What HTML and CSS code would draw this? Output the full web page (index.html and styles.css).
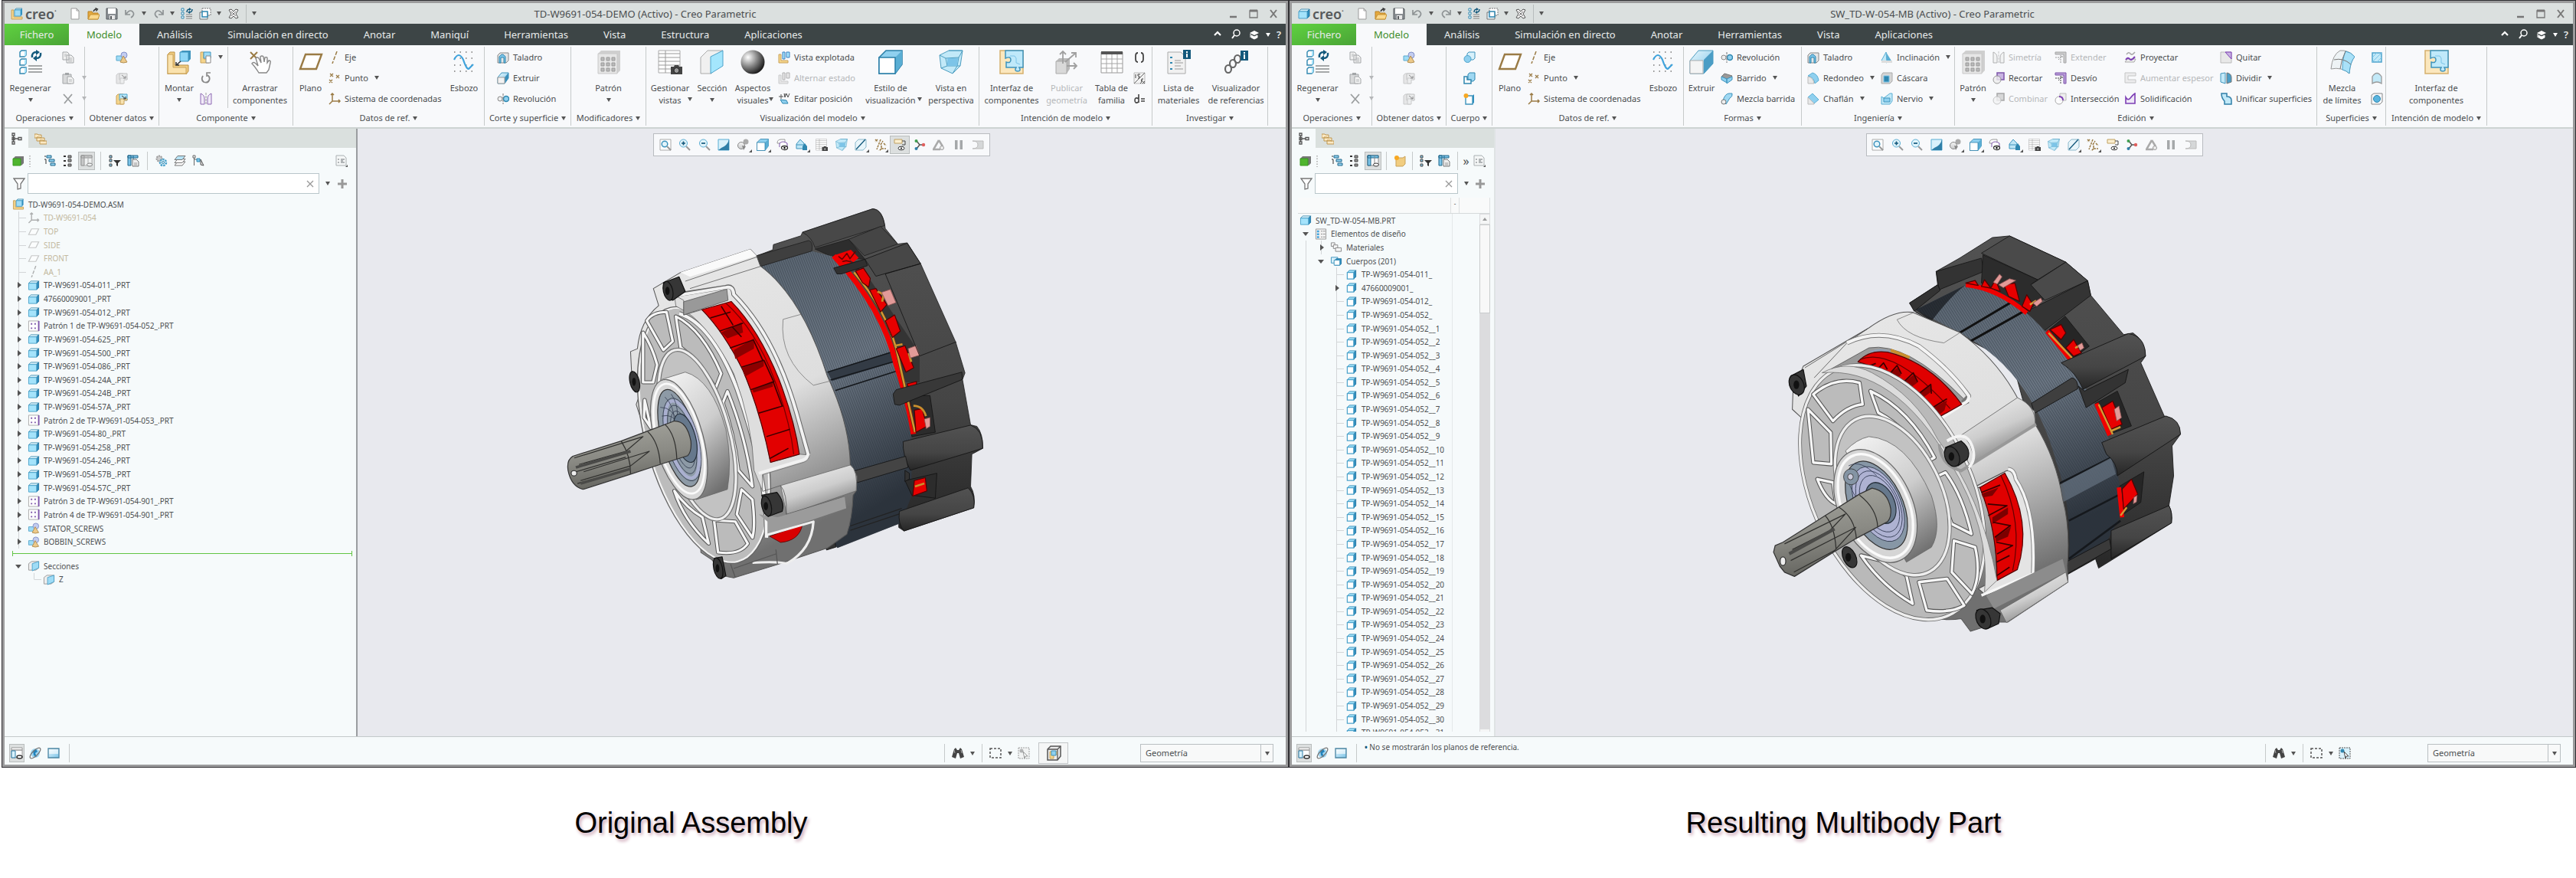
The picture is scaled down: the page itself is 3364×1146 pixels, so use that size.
FILE: index.html
```html
<!DOCTYPE html>
<html lang="es">
<head>
<meta charset="utf-8">
<title>Creo Parametric</title>
<link rel="stylesheet" href="styles.css">
</head>
<body>
<svg class="defs" aria-hidden="true">
<defs>
<linearGradient id="gb" x1="0" y1="0" x2="1" y2="1"><stop offset="0" stop-color="#e8f7fd"/><stop offset="1" stop-color="#7cc4e8"/></linearGradient>
<linearGradient id="gk" x1="0" y1="0" x2="0" y2="1"><stop offset="0" stop-color="#f4f4f4"/><stop offset="1" stop-color="#c9cacb"/></linearGradient>
<radialGradient id="gs" cx=".3" cy=".3" r=".75"><stop offset="0" stop-color="#fff"/><stop offset=".5" stop-color="#8c8c8c"/><stop offset="1" stop-color="#1c1c1c"/></radialGradient>
<symbol id="part" viewBox="0 0 16 16"><path d="M1 5l3-3h11l-3 3z" fill="#d8f1fb" stroke="#4d95b5"/><path d="M12 5l3-3v9l-3 3z" fill="#2b8cbd" stroke="#2b7ba5"/><path d="M1 5h11v9H1z" fill="#a4e3fb" stroke="#4da3cb"/></symbol>
<symbol id="body" viewBox="0 0 16 16"><path d="M2 5l3-3h9l-3 3z" fill="#a4e3fb" stroke="#3f94bd"/><path d="M11 5l3-3v9l-3 3z" fill="#2b8cbd" stroke="#2b7ba5"/><path d="M2 5h9v9H2z" fill="#fff" stroke="#4da3cb" stroke-width="1.3"/></symbol>
<symbol id="bodies" viewBox="0 0 16 16"><path d="M1 3h9v8H1z" fill="#d8f1fb" stroke="#3f94bd"/><path d="M6 7l2-2h7v7l-2 2H6z" fill="#2b8cbd" stroke="#2b7ba5"/><path d="M5 7h8v7H5z" fill="#fff" stroke="#3f94bd"/></symbol>
<symbol id="asm" viewBox="0 0 16 16"><path d="M1 3h3v9h11v3H1z" fill="#f5d58b" stroke="#c9a25b"/><path d="M5 3l2-2h8l-2 2z" fill="#d8f1fb" stroke="#4d95b5"/><path d="M13 3l2-2v8l-2 2z" fill="#2b8cbd"/><path d="M5 3h8v8H5z" fill="#9fdcf6" stroke="#4da3cb"/></symbol>
<symbol id="new" viewBox="0 0 16 16"><path d="M3 1h7l3 3v11H3z" fill="#fff" stroke="#9a9a9a"/><path d="M10 1v3h3" fill="none" stroke="#9a9a9a"/></symbol>
<symbol id="open" viewBox="0 0 16 16"><path d="M1 15V5h5l1 2h7v8z" fill="#e5a93d" stroke="#b98227"/><path d="M1 15l3-6h12l-2 6z" fill="#fbd98d" stroke="#c79334"/><path d="M8 5q1-3 4-3M10.500 .5l3 1.500-2 2.500" fill="none" stroke="#333" stroke-width="1.300"/></symbol>
<symbol id="save" viewBox="0 0 16 16"><path d="M1 1h13l1 1v13H1z" fill="#8a8f93" stroke="#55595c"/><path d="M3 1h10v7H3z" fill="#fff"/><path d="M5 10h7v5H5z" fill="#e8e8e8"/><path d="M6 11h2v4H6z" fill="#55595c"/></symbol>
<symbol id="undo" viewBox="0 0 16 16"><path d="M2 3v6h6M3 8q4-6 8-3 4 4-2 8" fill="none" stroke="#8d9294" stroke-width="1.700"/></symbol>
<symbol id="redo" viewBox="0 0 16 16"><path d="M14 3v6H8M13 8Q9 2 5 5q-4 4 2 8" fill="none" stroke="#8d9294" stroke-width="1.700"/></symbol>
<symbol id="regens" viewBox="0 0 16 16"><g fill="#fff" stroke="#2f87b0"><path d="M1 1h3v3H1zM1 6h3v3H1zM1 11h3v3H1z"/></g><path d="M7 9h8M7 11.500h8M7 14h8" stroke="#888"/><path d="M8 6q0-4 4-4M15 2q0 4-4 4" fill="none" stroke="#14597c" stroke-width="1.500"/><path d="M11 0l3 2-3 2zM12 4l-3 2 3 2z" fill="#14597c"/></symbol>
<symbol id="wins" viewBox="0 0 16 16"><path d="M4 1h11v9H4z" fill="#fff" stroke="#777" stroke-dasharray="2 1"/><path d="M1 6h10v9H1z" fill="#e6f3f8" stroke="#777"/><path d="M4 5h7v7H4z" fill="#fff" stroke="#2f87b0" stroke-width="1.500"/></symbol>
<symbol id="cls" viewBox="0 0 16 16"><path d="M2 3l3-1 3 3 3-3 3 1-3 5 3 5-3 1-3-3-3 3-3-1 3-5z" fill="#f2f2f2" stroke="#555"/><path d="M5 5l6 6M11 5l-6 6" stroke="#777"/></symbol>
<symbol id="copy" viewBox="0 0 16 16"><path d="M1 1h6l2 2v8H1zM6 5h6l3 3v7H6z" fill="#f0f0f0" stroke="#a3a6a8"/><path d="M8 9h5M8 11h5M8 13h5M3 4h3M3 6h2" stroke="#b5b8ba"/></symbol>
<symbol id="paste" viewBox="0 0 16 16"><path d="M1 3h11v12H1z" fill="#d8d9da" stroke="#a3a6a8"/><path d="M4 1h5v3H4z" fill="#a3a6a8"/><path d="M7 6h5l3 3v6H7z" fill="#f4f4f4" stroke="#a3a6a8"/><path d="M9 10h4M9 12h4" stroke="#b5b8ba"/></symbol>
<symbol id="del" viewBox="0 0 16 16"><path d="M2 2l11 12M13 2L3 14" stroke="#9b9e9f" stroke-width="1.800"/></symbol>
<symbol id="shapes" viewBox="0 0 16 16"><path d="M1 6h8v6H1z" fill="#9fdcf6" stroke="#5aa9cc"/><circle cx="11" cy="5" r="4" fill="#c3cdf0" stroke="#8291c9"/><path d="M10 6l5 8q-5 2-9 0z" fill="#ecc98a" stroke="#b28f51"/></symbol>
<symbol id="shr" viewBox="0 0 16 16"><path d="M1 4l2-2h7v13H1z" fill="#f5d58b" stroke="#c9a25b"/><path d="M5 2h10v8H5z" fill="#b5e6fa" stroke="#4da3cb"/><path d="M6 8h9v2h-4v5H6z" fill="#f7e2b0" stroke="#c9a25b"/><path d="M8 4l5 4M13 5v3h-3" stroke="#333" fill="none"/></symbol>
<symbol id="crt" viewBox="0 0 16 16"><path d="M1 1h4v9h7v5H1z" fill="#f5d58b" stroke="#c9a25b"/><path d="M5 1h9v8H5z" fill="#9fdcf6" stroke="#3f94bd"/><path d="M8 6h6v9H8z" fill="#fff" stroke="#888"/></symbol>
<symbol id="rep" viewBox="0 0 16 16"><path d="M4 5q-3 5 1 8 5 2 7-2 2-4-2-7" fill="none" stroke="#888" stroke-width="1.800"/><path d="M9 6V1h5" fill="none" stroke="#888" stroke-width="1.600"/></symbol>
<symbol id="mir" viewBox="0 0 16 16"><path d="M1 1q5 2 5 7v7H1zM15 1q-5 2-5 7v7h5z" fill="#f1ebf8" stroke="#8d68b3"/><path d="M8 0v16" stroke="#999" stroke-dasharray="3 1"/></symbol>
<symbol id="axis" viewBox="0 0 16 16"><path d="M11 0L5 16" stroke="#9a7b45" stroke-width="1.500" stroke-dasharray="5 2"/></symbol>
<symbol id="pt" viewBox="0 0 16 16"><path d="M2 2l4 4M6 2L2 6M10 4l4 4M14 4l-4 4M1 10l4 4M5 10l-4 4" stroke="#9a7b45" stroke-width="1.300"/></symbol>
<symbol id="csys" viewBox="0 0 16 16"><path d="M5 1v10h10M5 11l-4 4M3 3l2-2 2 2M13 9l2 2-2 2" fill="none" stroke="#9a7b45" stroke-width="1.500"/></symbol>
<symbol id="hole" viewBox="0 0 16 16"><path d="M1 5l3-3h11v10l-3 3H1z" fill="#e6e6e6" stroke="#888"/><path d="M3 7q4-6 8 0v8H9V8H5v7H3z" fill="#7cc4e8" stroke="#2f87b0"/></symbol>
<symbol id="ext" viewBox="0 0 16 16"><path d="M1 7l5-6h9v7l-5 7H1z" fill="url(#gb)" stroke="#3f94bd"/><path d="M10 7l5-6v7l-5 7z" fill="#3b8fba"/><path d="M1 7h9v8H1z" fill="#f2f2f2" stroke="#999"/></symbol>
<symbol id="rev" viewBox="0 0 16 16"><circle cx="4" cy="8" r="3" fill="#eee" stroke="#888"/><circle cx="12" cy="8" r="3.500" fill="#8fd0ef" stroke="#2f87b0" stroke-width="1.500"/><path d="M8 1v14" stroke="#777" stroke-dasharray="3 1"/></symbol>
<symbol id="expl" viewBox="0 0 16 16"><path d="M1 4h3v8h9v3H1z" fill="#f5d58b" stroke="#c9a25b"/><path d="M6 1h3v9H6zM11 1h4v7h-4z" fill="#a4e3fb" stroke="#3a7fc0"/></symbol>
<symbol id="epos" viewBox="0 0 16 16"><path d="M1 5h6M4 2v6M9 1v5M8 1l1 5 2-5 2 5 2-5" stroke="#555" fill="none"/><path d="M3 9l8 1 2 4H6z" fill="#8fd0ef" stroke="#2f87b0"/></symbol>
<symbol id="brk" viewBox="0 0 16 16"><path d="M6 2q-3 0-3 4v4q0 4 3 4M10 2q3 0 3 4v4q0 4-3 4" fill="none" stroke="#444" stroke-width="1.800"/></symbol>
<symbol id="fx" viewBox="0 0 16 16"><path d="M1 1h14v14H1z" fill="#f2f2f2" stroke="#bbb"/><path d="M1 15L15 1" stroke="#666"/><path d="M3 3v5M6 3h3M6 3v2q3 0 2 3H6M9 15q2 0 2-6h2M10 11h2M12 12l3 3M15 12l-3 3" stroke="#444" fill="none"/></symbol>
<symbol id="deq" viewBox="0 0 16 16"><path d="M7 2v11M7 8q-5-3-5 2t5 2M10 8h5M10 11h5" fill="none" stroke="#444" stroke-width="1.600"/></symbol>
<symbol id="regen" viewBox="0 0 32 32"><g fill="#fff" stroke="#2f87b0" stroke-width="1.400"><path d="M2 3l2-2h6v6l-2 2H2zM2 14l2-2h6v6l-2 2H2zM2 25l2-2h6v6l-2 2H2z"/></g><g fill="#a4e3fb"><path d="M8 3l2-2v6L8 9zM8 14l2-2v6l-2 2zM8 25l2-2v6l-2 2z"/></g><path d="M13 21h18M13 25h18M13 29h18" stroke="#8a8d8f" stroke-width="1.500"/><path d="M18 10q-1-7 6-7M29 4q1 7-6 7" fill="none" stroke="#14597c" stroke-width="2.500"/><path d="M23 0l5 3-5 4zM24 7l-5 4 5 4z" fill="#14597c"/></symbol>
<symbol id="mont" viewBox="0 0 32 32"><path d="M1 6l3-3h6v17h18v8l-3 4H1z" fill="#f1cd80" stroke="#b98f45"/><path d="M1 6h7v17h17v8H1z" fill="#fae2ad" stroke="#c9a25b"/><path d="M17 3l3-2h11v11l-3 3H17z" fill="#3f94bd"/><path d="M17 3h11v12H17z" fill="#8fd7f7" stroke="#3f94bd"/><path d="M18 15l-6 5M12 16v4h4" stroke="#333" stroke-width="1.500" fill="none"/></symbol>
<symbol id="hand" viewBox="0 0 32 32"><path d="M3 3l9 9M12 3l-9 9" stroke="#9a7b45" stroke-width="2"/><path d="M14 30q-5-8-9-12 2-3 5 0l3 3-3-10q2-2 4 0l3 6-1-8q2-2 4 0l1 7 1-6q3-1 3 1v6l2-3q3 0 2 3l-2 9-3 4z" fill="#fff" stroke="#888" stroke-width="1.400"/></symbol>
<symbol id="plane" viewBox="0 0 32 32"><path d="M9 6h21l-7 19H2z" fill="#fff" stroke="#9a7b45" stroke-width="2.400"/></symbol>
<symbol id="sket" viewBox="0 0 32 32"><path d="M3 3h28M3 11h28M3 20h28M3 28h28" stroke="#777" stroke-width="1.500" stroke-dasharray="1.500 6"/><path d="M3 13q6-12 12 0 5 15 8 11l5-5" fill="none" stroke="#3fa3dc" stroke-width="2.200"/></symbol>
<symbol id="pat" viewBox="0 0 32 32"><path d="M2 5l4-4h25v26l-4 4H2z" fill="#cfcfcf"/><path d="M2 5h25v26H2z" fill="#e6e6e6" stroke="#c8c8c8"/><path d="M6 10h4v4H6zM13 10h4v4h-4zM20 10h4v4h-4zM6 17h4v4H6zM13 17h4v4h-4zM20 17h4v4h-4zM6 24h4v4H6zM13 24h4v4h-4zM20 24h4v4h-4z" fill="#bbb" stroke="#999"/></symbol>
<symbol id="mview" viewBox="0 0 32 32"><path d="M1 1h28v29H1z" fill="#fff" stroke="#aaa"/><path d="M1 5h28M1 10h28M1 15h28M1 20h28M1 25h28M10 1v29" stroke="#999"/><path d="M17 22h4l1-2h5l1 2h4v10H17z" fill="#444"/><circle cx="24.500" cy="27" r="3.500" fill="#999" stroke="#222"/></symbol>
<symbol id="sec" viewBox="0 0 32 32"><path d="M1 10l9-9h20L15 9v22H1z" fill="#f0f0f0" stroke="#aaa"/><path d="M14 9l16-8v20l-16 10z" fill="#a4e6fd" stroke="#4da3cb"/></symbol>
<symbol id="sph" viewBox="0 0 32 32"><circle cx="16" cy="16" r="15.500" fill="url(#gs)"/></symbol>
<symbol id="sty" viewBox="0 0 32 32"><path d="M1 10l9-9h21v18l-9 12H1z" fill="#8fd0ef" stroke="#2a7fa8" stroke-width="1.500"/><path d="M22 10l9-9v18l-9 12z" fill="#5aaed4"/><path d="M1 10h21v21H1z" fill="#fff" stroke="#2a7fa8" stroke-width="1.500"/></symbol>
<symbol id="per" viewBox="0 0 32 32"><path d="M1 7l12-6h18l-3 20-10 10L3 24z" fill="#c2e9f8" stroke="#4d9dc0"/><path d="M1 7l8 4 17-1 5-9-18 0M9 11l2 10 13 0 2-11M3 24l8-3M24 21l4 0M18 31l6-10" fill="none" stroke="#4d9dc0"/><path d="M11 11h14l-1 10H11z" fill="#7cc4e8"/></symbol>
<symbol id="intf" viewBox="0 0 32 32"><path d="M1 1h30v30H1z" fill="#fbe7bd" stroke="#d5b06d" stroke-width="1.500"/><path d="M8 1h23v22h-5q3 5-2 5t-2-5H9v-7q6 2 6-3t-7-2z" fill="#bfe9fa" stroke="#3f94bd" stroke-width="1.500"/><path d="M14 8h6l2 3v6l5 2" fill="none" stroke="#7cc4e8"/></symbol>
<symbol id="pub" viewBox="0 0 32 32"><path d="M2 15l4-4h14v14l-4 6H2z" fill="#b9b9b9"/><path d="M2 15h14v16H2z" fill="#d9d9d9" stroke="#aaa"/><path d="M11 18V2M7 6l4-4 4 4M14 16L28 4M22 4h6v6M16 21h13M25 17l4 4-4 4" fill="none" stroke="#a0a0a0" stroke-width="1.800"/></symbol>
<symbol id="tab" viewBox="0 0 32 32"><path d="M2 3h28v27H2z" fill="#fff" stroke="#999"/><path d="M2 2h28v4H2z" fill="#555"/><path d="M2 12h28M2 18h28M2 24h28M9 6v24M16 6v24M23 6v24" stroke="#a5a5a5"/></symbol>
<symbol id="list" viewBox="0 0 32 32"><path d="M2 3h17l6 6v22H2z" fill="#f1f1f1" stroke="#aaa"/><path d="M5 9h3v2H5zM5 16h3v2H5zM5 24h3v2H5z" fill="#2f87b0"/><path d="M11 14h8M11 17h11M11 21h8M11 25h11" stroke="#999"/><path d="M22 0h10v12H22z" fill="#14597c"/><path d="M26 2h2v2h-2zM26 5h2v5h-2z" fill="#fff"/></symbol>
<symbol id="chain" viewBox="0 0 32 32"><g fill="none" stroke="#666" stroke-width="2.200"><ellipse cx="6" cy="25" rx="4" ry="5"/><ellipse cx="12" cy="18" rx="4" ry="5"/><ellipse cx="18" cy="12" rx="4" ry="5"/></g><path d="M22 1h10v13H22z" fill="#14597c"/><path d="M26 3h2v2h-2zM26 6h2v6h-2z" fill="#fff"/></symbol>
<symbol id="extb" viewBox="0 0 32 32"><path d="M1 14L12 1h19v17L19 31H1z" fill="url(#gb)" stroke="#4d9dc0"/><path d="M19 13L31 1v17L19 31z" fill="#4b9dc5"/><path d="M1 14h17v17H1z" fill="#f4f4f4" stroke="#aaa"/></symbol>
<symbol id="bnd" viewBox="0 0 32 32"><path d="M13 1q11-1 19 8-6 7-7 22Q15 22 1 25 3 6 13 1z" fill="#eef3f5" stroke="#999"/><path d="M20 2q7 1 12 7-6 7-7 22-4-4-9-5 0-15 4-24z" fill="#a9e1f8" stroke="#4da3cb"/><path d="M5 13q12-3 22 6M20 2q-6 12-7 23" fill="none" stroke="#777"/></symbol>
<symbol id="bool" viewBox="0 0 16 16"><path d="M5 3l2-2h8v8l-2 2H5z" fill="#d8f1fb" stroke="#3f94bd"/><circle cx="5.500" cy="10" r="4.500" fill="#8fd0ef" stroke="#4da3cb"/></symbol>
<symbol id="spb" viewBox="0 0 16 16"><path d="M6 3l2-2h7v9l-2 2H6z" fill="#9fd8f2" stroke="#2f87b0"/><path d="M1 6h4v4h5v5H1z" fill="#fff" stroke="#2f87b0" stroke-width="1.500"/></symbol>
<symbol id="nbody" viewBox="0 0 16 16"><path d="M3 4h9l2-2v11l-2 2H3z" fill="#2b8cbd"/><path d="M3 4h9v11H3z" fill="#fff" stroke="#3f94bd" stroke-width="1.400"/><circle cx="3.500" cy="4" r="3" fill="#f7a823"/></symbol>
<symbol id="swp" viewBox="0 0 16 16"><path d="M1 6l4-4 10 3-3 4-3 1z" fill="#999" stroke="#777"/><path d="M1 6l7 3v5l-7-4zM8 9l7-3v4l-7 5z" fill="#8fd0ef" stroke="#3f94bd"/></symbol>
<symbol id="swb" viewBox="0 0 16 16"><path d="M3 10Q6 1 11 1h4q1 4-3 6l-5 8z" fill="#9fd8f2" stroke="#3f94bd"/><circle cx="4" cy="12" r="3" fill="#eee" stroke="#777"/></symbol>
<symbol id="rnd" viewBox="0 0 16 16"><path d="M1 5l6-4q7 2 8 10l-5 4q-1-8-9-10z" fill="#8fd0ef" stroke="#5aaed4"/><path d="M1 6q7 1 8 9H1z" fill="#e8e8e8" stroke="#bbb"/></symbol>
<symbol id="chf" viewBox="0 0 16 16"><path d="M1 6l6-5 8 8-6 5z" fill="#8fd0ef" stroke="#5aaed4"/><path d="M1 6l8 8v1H1z" fill="#e8e8e8" stroke="#bbb"/></symbol>
<symbol id="drf" viewBox="0 0 16 16"><path d="M7 1l8 13H8z" fill="#5aaed4"/><path d="M7 1L1 12l7 3z" fill="#c2e9f8" stroke="#5aaed4"/><path d="M1 12h14v3H1z" fill="#ddd"/></symbol>
<symbol id="shl" viewBox="0 0 16 16"><path d="M1 4l2-3h12v11l-3 3H1z" fill="#d5d5d5" stroke="#aaa"/><path d="M4 5h7v8H4z" fill="#2f87b0" stroke="#7cc4e8"/></symbol>
<symbol id="rib" viewBox="0 0 16 16"><path d="M1 5l3 2 8-6h3v10l-3 4H1z" fill="#c2e9f8" stroke="#5aaed4"/><path d="M4 7h8v5H4z" fill="#8fd0ef" stroke="#3f94bd"/></symbol>
<symbol id="trim" viewBox="0 0 16 16"><path d="M6 1h9v9H6z" fill="#c9b3e3" stroke="#7d55aa" stroke-width="1.500"/><circle cx="6" cy="10" r="5" fill="#eee" fill-opacity=".8" stroke="#999"/></symbol>
<symbol id="off" viewBox="0 0 16 16"><path d="M1 1h14v14h-3V4H1z" fill="#b89bd8" stroke="#7d55aa"/><path d="M1 8h7v7M5 11l5-5M7 6h3v3" fill="none" stroke="#444" stroke-dasharray="2 1"/></symbol>
<symbol id="int" viewBox="0 0 16 16"><path d="M7 1h8v9H7z" fill="#eee" stroke="#bbb"/><circle cx="6" cy="10" r="5" fill="#fff" fill-opacity=".7" stroke="#aaa"/><path d="M6 5q5 0 5 5" fill="none" stroke="#7d3fb5" stroke-width="2"/></symbol>
<symbol id="prj" viewBox="0 0 16 16"><path d="M3 4q3-4 5-1t6-2" fill="none" stroke="#aaa" stroke-width="1.500"/><path d="M1 14l3-4h11l-2 4z" fill="#eee" stroke="#aaa"/><path d="M2 11q3-4 5-1t7-3" fill="none" stroke="#7d3fb5" stroke-width="2"/></symbol>
<symbol id="thk" viewBox="0 0 16 16"><path d="M1 1h14v4H5v5h10v4H1z" fill="#e2e2e2" stroke="#999"/></symbol>
<symbol id="sol" viewBox="0 0 16 16"><path d="M2 6q3 5 6 1t6-6v13H2z" fill="#eee7f7" stroke="#7d3fb5" stroke-width="1.600"/></symbol>
<symbol id="rem" viewBox="0 0 16 16"><path d="M1 1h14v14H1z" fill="#e8e8e8" stroke="#bbb"/><path d="M7 1h8v9z" fill="#c9b3e3" stroke="#7d3fb5"/></symbol>
<symbol id="spl" viewBox="0 0 16 16"><path d="M1 2l6-1v14l-6-2z" fill="#c2e9f8" stroke="#3f94bd"/><path d="M9 1q6 1 6 6v6l-6 2z" fill="#4b9dc5" stroke="#777"/></symbol>
<symbol id="uni" viewBox="0 0 16 16"><path d="M2 1h7v4q6 0 6 5v5H6v-4q-4-4-4-10z" fill="#c2e9f8" stroke="#2f7fa8" stroke-width="1.500"/></symbol>
<symbol id="fill" viewBox="0 0 16 16"><path d="M2 2h12v12H2z" fill="#c2e9f8" stroke="#4da3cb" stroke-width="1.500"/><path d="M2 8l6-6M2 14L14 2M8 14l6-6" stroke="#7cc4e8"/></symbol>
<symbol id="ssf" viewBox="0 0 16 16"><path d="M2 6q6-9 12 0v9q-6-4-12 0z" fill="#c2e9f8" stroke="#999" stroke-width="1.300"/></symbol>
<symbol id="fsf" viewBox="0 0 16 16"><path d="M1 3l3-2h11v11l-3 3H1z" fill="none" stroke="#888"/><circle cx="8" cy="8" r="4.500" fill="#5ab4de" stroke="#2f87b0"/></symbol>
<symbol id="tree" viewBox="0 0 16 16"><path d="M2 1h3v3H2zM2 6.500h3v3H2zM2 12h3v3H2zM10 6.500h4v3h-4zM5 8h5M3.500 4v8" fill="none" stroke="#555" stroke-width="1.300"/></symbol>
<symbol id="fold" viewBox="0 0 16 16"><g fill="#fbe9c4" stroke="#bf9750"><path d="M0 2h4l1 1h4v4H0zM3 6h4l1 1h5v4H3zM7 10h4l1 1h4v4H7z"/></g></symbol>
<symbol id="grn" viewBox="0 0 16 16"><path d="M1 5l3-3h11v9l-3 3z" fill="#777"/><path d="M1 5h10v9H1z" fill="#4fb52f" stroke="#389a20"/></symbol>
<symbol id="dots" viewBox="0 0 6 16"><path d="M3 1v15" stroke="#aaa" stroke-width="1.500" stroke-dasharray="1.500 2"/></symbol>
<symbol id="expd" viewBox="0 0 16 16"><path d="M1 2h2M1 6h2v6" stroke="#333" fill="none"/><g fill="#8fd0ef" stroke="#22698c"><path d="M4 1h6v3H4zM7 6h7v3H7zM9 11h6v3H9z"/></g></symbol>
<symbol id="clps" viewBox="0 0 16 16"><path d="M2 2h3M2 8h3M2 14h3" stroke="#333" stroke-width="2"/><path d="M8 1h4v3H8zM8 6h4v3H8zM8 12h4v3H8z" fill="#999" stroke="#444"/></symbol>
<symbol id="cols" viewBox="0 0 16 16"><path d="M1 1h14v13H1z" fill="#fff" stroke="#888"/><path d="M1 1h14v3H1zM1 1h4v13H1z" fill="#7cc4e8" stroke="#22698c"/><path d="M10 2v9" stroke="#888"/><ellipse cx="12" cy="13" rx="3.500" ry="2" fill="#fff" stroke="#333"/></symbol>
<symbol id="ftr" viewBox="0 0 16 16"><path d="M1 1h3v3H1zM1 6h3v3H1zM1 12h3v3H1z" fill="#8fd0ef" stroke="#444"/><path d="M6 7h10l-4 4v4l-2-1v-3z" fill="#333"/></symbol>
<symbol id="cols2" viewBox="0 0 16 16"><path d="M1 1h13v3H1zM1 1h4v13H1zM8 1v8" fill="#7cc4e8" stroke="#22698c"/><path d="M7 6h5l3 3v6H7z" fill="#eee" stroke="#777"/><path d="M9 11h4M9 13h4" stroke="#999"/></symbol>
<symbol id="gear" viewBox="0 0 16 16"><circle cx="5" cy="5" r="3.500" fill="#ccc" stroke="#999" stroke-width="2" stroke-dasharray="2 1"/><circle cx="10" cy="10" r="4" fill="#e5f5fb" stroke="#4da3cb" stroke-width="2.500" stroke-dasharray="2.500 1"/><circle cx="10" cy="10" r="1.500" fill="#fff" stroke="#2f87b0"/></symbol>
<symbol id="lay" viewBox="0 0 16 16"><g fill="#fff" stroke="#777"><path d="M5 9h10l-4 5H1z"/><path d="M5 5.500h10l-4 5H1z"/><path d="M5 1.500h10l-4 5H1z" fill="#b5e2f5"/></g></symbol>
<symbol id="nodes" viewBox="0 0 16 16"><path d="M1 1h3v3H1zM2.500 4v10M2.500 6h4" stroke="#666" fill="none"/><path d="M6 5h4v4H6z" fill="#7cc4e8" stroke="#2f87b0"/><path d="M11 6l4 8-4-1z" fill="#ddd" stroke="#555"/></symbol>
<symbol id="doc" viewBox="0 0 16 16"><path d="M1 1h10l3 3v10H1z" fill="#f5f7f7" stroke="#aab0b2"/><path d="M3 6h2M3 10h2M7 6h5M7 8h3M7 10h5" stroke="#9aa0a2" stroke-width="1.300"/><path d="M16 13v3h-3z" fill="#555"/></symbol>
<symbol id="fun" viewBox="0 0 16 16"><path d="M1 1h14l-5 7v6l-4 1V8z" fill="#fff" stroke="#777" stroke-width="1.300"/></symbol>
<symbol id="plus" viewBox="0 0 16 16"><path d="M8 2v12M2 8h12" stroke="#999" stroke-width="3"/></symbol>
<symbol id="x" viewBox="0 0 16 16"><path d="M4 4l8 8M12 4l-8 8" stroke="#999" stroke-width="1.300"/></symbol>
<symbol id="npk" viewBox="0 0 16 16"><path d="M3 4h9l3-2v10l-3 3H3z" fill="#f1cd80" stroke="#c9a25b"/><circle cx="4" cy="4" r="3" fill="#f7a823"/></symbol>
<symbol id="pln" viewBox="0 0 16 16"><path d="M5 4h10l-4 8H1z" fill="#fff" stroke="#a5a5a5" stroke-width="1.300"/></symbol>
<symbol id="ptn" viewBox="0 0 16 16"><path d="M1 1h14v14H1z" fill="#fff" stroke="#aaa"/><path d="M15 1v14" stroke="#7d55aa" stroke-width="2"/><path d="M4 4h2v2H4zM9 4h2v2H9zM4 10h2v2H4zM9 10h2v2H9z" fill="#7d55aa"/></symbol>
<symbol id="scn" viewBox="0 0 16 16"><path d="M1 5l4-3h10v9l-4 3H1z" fill="#eee" stroke="#999"/><path d="M6 5l9-3v9l-9 4z" fill="#9fdcf6" stroke="#4da3cb"/></symbol>
<symbol id="des" viewBox="0 0 16 16"><path d="M1 1h14v14H1z" fill="#f2f2f2" stroke="#999"/><path d="M4 3v11" stroke="#3fa3dc" stroke-width="3" stroke-dasharray="2.500 1.500"/><path d="M8 4h2M8 8h2M8 12h2M11 4h3M11 8h3M11 12h3" stroke="#888"/></symbol>
<symbol id="mat" viewBox="0 0 16 16"><g fill="#f6f6f6" stroke="#888"><path d="M1 2h5v5H1z"/><path d="M4 5h6v5H4z"/><path d="M7 9h8v5H7z"/></g></symbol>
<symbol id="zf" viewBox="0 0 16 16"><path d="M1 1h14v14H1z" fill="#fff" stroke="#aaa"/><circle cx="7" cy="7" r="3.800" fill="#e2f4fb" stroke="#3f94bd" stroke-width="1.500"/><path d="M10 10l5 5" stroke="#999" stroke-width="2"/></symbol>
<symbol id="zi" viewBox="0 0 16 16"><path d="M10 10l5 5" stroke="#999" stroke-width="2"/><circle cx="6.500" cy="6" r="5" fill="#e2f4fb" stroke="#5aaed4"/><path d="M4 6h5M6.500 3.500v5" stroke="#14597c" stroke-width="1.700"/></symbol>
<symbol id="zo" viewBox="0 0 16 16"><path d="M10 10l5 5" stroke="#999" stroke-width="2"/><circle cx="6.500" cy="6" r="5" fill="#e2f4fb" stroke="#5aaed4"/><path d="M4 6h5" stroke="#14597c" stroke-width="1.700"/></symbol>
<symbol id="rp" viewBox="0 0 16 16"><path d="M1 1h14v14H1z" fill="#d9f1fb" stroke="#5aaed4"/><path d="M15 1Q13 9 5 12l-4 3h14z" fill="#2f7fa8"/></symbol>
<symbol id="ap" viewBox="0 0 16 16"><circle cx="11" cy="4" r="3.500" fill="#aaa"/><circle cx="5" cy="9" r="4.500" fill="url(#gk)" stroke="#888"/><path d="M6 9l5 1-3 5z" fill="#888"/></symbol>
<symbol id="eye" viewBox="0 0 16 16"><path d="M1 6q0-5 5-5h5v5H1z" fill="#fff" stroke="#999"/><path d="M4 11V6q4-4 10 0v5" fill="#fff" stroke="#7d55aa"/><ellipse cx="10.500" cy="12" rx="4" ry="2.500" fill="#fff" stroke="#333" stroke-width="1.300"/><circle cx="10.500" cy="12" r="1.200"/></symbol>
<symbol id="sv" viewBox="0 0 16 16"><path d="M1 7l5-6 5 5v7H1zM1 8h10" fill="#bfe6f6" stroke="#3f94bd"/><path d="M9 10l3-4 3 4v5H9z" fill="#2f87b0"/></symbol>
<symbol id="cut" viewBox="0 0 16 16"><path d="M1 5l4-4h10v10l-4 4H1z" fill="#e9f5fa" stroke="#8bb9cc"/><path d="M2 14L14 1" stroke="#14597c" stroke-width="1.300"/></symbol>
<symbol id="dtm" viewBox="0 0 16 16"><path d="M1 1l3 3M4 1L1 4M8 1L3 14M8 8l3-5M9 9v4h6M9 13l-3 3M12 6l3 3" fill="none" stroke="#9a7b45" stroke-width="1.500" stroke-dasharray="3 1"/></symbol>
<symbol id="ann" viewBox="0 0 16 16"><path d="M1 1h10v5H1z" fill="#fbefd0" stroke="#c0a060"/><path d="M11 3h4v5h-4" fill="none" stroke="#444"/><ellipse cx="10" cy="12.500" rx="4" ry="2.300" fill="#fff" stroke="#333"/><circle cx="10" cy="12.500" r="1"/></symbol>
<symbol id="spin" viewBox="0 0 16 16"><path d="M4 3l4 5-4 5M8 8h5" stroke="#555" stroke-width="1.500" fill="none"/><circle cx="3.500" cy="3" r="2" fill="#3f9e4f"/><circle cx="3.500" cy="13" r="2" fill="#2f7fa8"/><circle cx="13" cy="8" r="2.200" fill="#e0605e"/></symbol>
<symbol id="tri" viewBox="0 0 16 16"><path d="M8 2L1 14h9M8 2l5 8" fill="none" stroke="#aaa" stroke-width="2.500"/><circle cx="12" cy="12" r="2.500" fill="#eee" stroke="#999"/></symbol>
<symbol id="pau" viewBox="0 0 16 16"><path d="M3 2h3.500v12H3zM9.500 2H13v12H9.500z" fill="#a5a8aa"/></symbol>
<symbol id="res" viewBox="0 0 16 16"><path d="M1 3h14v10H1q7 0 7-5T1 3z" fill="#d5d7d8" stroke="#bbb"/></symbol>
<symbol id="st1" viewBox="0 0 16 16"><path d="M1 1h14v13H1z" fill="#fff" stroke="#999"/><path d="M1 4h14" stroke="#999" stroke-width="1.500"/><path d="M1 5h5v9H1z" fill="#d9f1fb" stroke="#2f7fa8"/><ellipse cx="11.500" cy="13" rx="3.500" ry="2" fill="#fff" stroke="#333" stroke-width="1.500"/></symbol>
<symbol id="glb" viewBox="0 0 16 16"><circle cx="8" cy="8" r="6" fill="#9fd6f2"/><path d="M5 5l4-2 2 3-3 2 2 5-4-2z" fill="#2383bb"/><ellipse cx="8" cy="8" rx="9" ry="3.500" transform="rotate(-45 8 8)" fill="none" stroke="#777" stroke-width="1.300"/></symbol>
<symbol id="scr" viewBox="0 0 16 16"><path d="M1 2h14v12H1z" fill="url(#gb)" stroke="#4d86a3" stroke-width="1.300"/><path d="M2 3h12v6H2z" fill="#fff" fill-opacity=".6"/></symbol>
<symbol id="bin" viewBox="0 0 16 16"><path d="M3 3l2-2 2 3h2l2-3 2 2 3 10-5 2-2-7H7l-2 7-5-2z" fill="#444"/><path d="M3 4l1 4M12 4l1 4" stroke="#aaa"/></symbol>
<symbol id="dsh" viewBox="0 0 16 16"><path d="M1 2h14v12H1z" fill="none" stroke="#555" stroke-width="1.500" stroke-dasharray="3 2"/></symbol>
<symbol id="slc" viewBox="0 0 16 16"><path d="M1 1h14v14H1z" fill="#d9f1fb" stroke="#555" stroke-dasharray="2 1"/><circle cx="5" cy="5" r="2.500" fill="#2f87b0"/><path d="M7 6l6 6h-3l-1 3z" fill="#fff" stroke="#444"/></symbol>
<symbol id="cbs" viewBox="0 0 20 20"><path d="M2 5l4-4h13v13l-4 5H2z" fill="#ececec" stroke="#555" stroke-width="1.500"/><path d="M2 5h13v14M15 5l4-4" fill="none" stroke="#555" stroke-width="1.300"/><path d="M5 8h9v4h-4v5H5z" fill="#f5d58b" stroke="#c9a25b"/><path d="M7 7h6v6H7z" fill="#8fd0ef" stroke="#3f94bd"/></symbol>
<symbol id="min" viewBox="0 0 16 16"><path d="M3 12h9" stroke="#777" stroke-width="2.500"/></symbol>
<symbol id="max" viewBox="0 0 16 16"><path d="M3 4h10v9H3z" fill="none" stroke="#777" stroke-width="1.300"/><path d="M3 4h10" stroke="#777" stroke-width="3"/></symbol>
<symbol id="wx" viewBox="0 0 16 16"><path d="M4 3l8 10M12 3L4 13" stroke="#777" stroke-width="2"/></symbol>
<symbol id="chev" viewBox="0 0 16 16"><path d="M4 9l4-4 4 4" fill="none" stroke="#fff" stroke-width="2.200"/></symbol>
<symbol id="mag" viewBox="0 0 16 16"><circle cx="9" cy="6" r="4" fill="none" stroke="#fff" stroke-width="1.500"/><path d="M6 9l-3 4" stroke="#fff" stroke-width="2"/></symbol>
<symbol id="cap" viewBox="0 0 16 16"><path d="M2 6l6-3 6 3-6 3z" fill="#fff"/><path d="M4 9l4 2 4-2v3l-4 2-4-2zM3 7v5" fill="#fff" stroke="#fff"/></symbol>
<linearGradient id="al" x1="0" y1="0" x2=".35" y2="1"><stop offset="0" stop-color="#e8e8e8"/><stop offset=".6" stop-color="#dedede"/><stop offset=".85" stop-color="#9a9a9a"/><stop offset="1" stop-color="#707070"/></linearGradient>
<linearGradient id="hb" x1=".2" y1="0" x2=".7" y2="1"><stop offset="0" stop-color="#f0f0f0"/><stop offset=".5" stop-color="#cdcdcd"/><stop offset="1" stop-color="#707070"/></linearGradient>
<linearGradient id="bk" x1="0" y1="0" x2="0" y2="1"><stop offset="0" stop-color="#525252"/><stop offset=".6" stop-color="#454545"/><stop offset="1" stop-color="#262626"/></linearGradient>
<linearGradient id="sh" x1=".4" y1="0" x2=".6" y2="1"><stop offset="0" stop-color="#a3a39c"/><stop offset=".5" stop-color="#8a8a84"/><stop offset="1" stop-color="#5f5f5a"/></linearGradient>
<linearGradient id="stt" x1="0" y1="0" x2=".3" y2="1"><stop offset="0" stop-color="#596470"/><stop offset=".5" stop-color="#6b7683"/><stop offset="1" stop-color="#2c333c"/></linearGradient>
<pattern id="lam" width="7" height="7" patternUnits="userSpaceOnUse" patternTransform="rotate(-20)"><path d="M0 0v7" stroke="#29323c" stroke-width="2.500"/></pattern>
<pattern id="lam2" width="7" height="7" patternUnits="userSpaceOnUse" patternTransform="rotate(-34)"><path d="M0 0v7" stroke="#29323c" stroke-width="2.500"/></pattern>
</defs>
</svg>
<main class="page">
<figure class="shot">
<section class="window">
<header class="title"><span class="brand"><svg class="s"><use href="#asm"/></svg>creo<sup>•</sup></span>
<nav class="quick"><button aria-label="Nuevo"><svg class="s"><use href="#new"/></svg></button><button aria-label="Abrir"><svg class="s"><use href="#open"/></svg></button><button aria-label="Guardar"><svg class="s"><use href="#save"/></svg></button><button class="dd" aria-label="Deshacer"><svg class="s"><use href="#undo"/></svg></button><button class="dd" aria-label="Rehacer"><svg class="s"><use href="#redo"/></svg></button><button aria-label="Regenerar"><svg class="s"><use href="#regens"/></svg></button><button class="dd" aria-label="Ventanas"><svg class="s"><use href="#wins"/></svg></button><button aria-label="Cerrar"><svg class="s"><use href="#cls"/></svg></button><button class="more dd" aria-label="Personalizar"></button></nav>
<h1>TD-W9691-054-DEMO (Activo) - Creo Parametric</h1>
<span class="wctl"><button aria-label="Minimizar"><svg class="s"><use href="#min"/></svg></button><button aria-label="Maximizar"><svg class="s"><use href="#max"/></svg></button><button aria-label="Cerrar ventana"><svg class="s"><use href="#wx"/></svg></button></span></header>
<nav class="tabs"><button class="file">Fichero</button><button class="on">Modelo</button><button>Análisis</button><button>Simulación en directo</button><button>Anotar</button><button>Maniquí</button><button>Herramientas</button><button>Vista</button><button>Estructura</button><button>Aplicaciones</button><span class="tools"><button aria-label="Minimizar cinta"><svg class="s"><use href="#chev"/></svg></button><button aria-label="Buscar"><svg class="s"><use href="#mag"/></svg></button><button class="dd" aria-label="Aprendizaje"><svg class="s"><use href="#cap"/></svg></button><button>?</button></span></nav>
<div class="ribbon">
<section class="grp ops"><div class="gb"><button class="big dd"><svg><use href="#regen"/></svg>Regenerar</button><div class="col"><button class="off" aria-label="Copiar"><svg class="s"><use href="#copy"/></svg></button><button class="off dd" aria-label="Pegar"><svg class="s"><use href="#paste"/></svg></button><button class="off dd" aria-label="Suprimir"><svg class="s"><use href="#del"/></svg></button></div></div><button class="gl">Operaciones</button></section>
<section class="grp data"><div class="gb"><div class="col mid"><button aria-label="Función de usuario"><svg class="s"><use href="#shapes"/></svg></button><button class="dim" aria-label="Copiar geometría"><svg class="s"><use href="#shr"/></svg></button><button aria-label="Desabstracción"><svg class="s"><use href="#shr"/></svg></button></div></div><button class="gl">Obtener datos</button></section>
<section class="grp comp"><div class="gb"><button class="big dd"><svg><use href="#mont"/></svg>Montar</button><div class="col"><button class="dd" aria-label="Crear"><svg class="s"><use href="#crt"/></svg></button><button aria-label="Repetir"><svg class="s"><use href="#rep"/></svg></button><button aria-label="Simetría"><svg class="s"><use href="#mir"/></svg></button></div><button class="big rule"><svg><use href="#hand"/></svg>Arrastrar<br>componentes</button></div><button class="gl">Componente</button></section>
<section class="grp datum"><div class="gb"><button class="big"><svg><use href="#plane"/></svg>Plano</button><div class="col"><button><svg class="s"><use href="#axis"/></svg>Eje</button><button class="dd"><svg class="s"><use href="#pt"/></svg>Punto</button><button><svg class="s"><use href="#csys"/></svg>Sistema de coordenadas</button></div><button class="big"><svg><use href="#sket"/></svg>Esbozo</button></div><button class="gl">Datos de ref.</button></section>
<section class="grp cut"><div class="gb"><div class="col"><button><svg class="s"><use href="#hole"/></svg>Taladro</button><button><svg class="s"><use href="#ext"/></svg>Extruir</button><button><svg class="s"><use href="#rev"/></svg>Revolución</button></div></div><button class="gl">Corte y superficie</button></section>
<section class="grp modi"><div class="gb"><button class="big dd"><svg><use href="#pat"/></svg>Patrón</button></div><button class="gl">Modificadores</button></section>
<section class="grp mview"><div class="gb"><button class="big ddi"><svg><use href="#mview"/></svg>Gestionar<br>vistas</button><button class="big dd"><svg><use href="#sec"/></svg>Sección</button><button class="big ddi"><svg><use href="#sph"/></svg>Aspectos<br>visuales</button><div class="col"><button><svg class="s"><use href="#expl"/></svg>Vista explotada</button><button class="dim"><svg class="s"><use href="#expl"/></svg>Alternar estado</button><button><svg class="s"><use href="#epos"/></svg>Editar posición</button></div><button class="big ddi"><svg><use href="#sty"/></svg>Estilo de<br>visualización</button><button class="big"><svg><use href="#per"/></svg>Vista en<br>perspectiva</button></div><button class="gl">Visualización del modelo</button></section>
<section class="grp intent"><div class="gb"><button class="big"><svg><use href="#intf"/></svg>Interfaz de<br>componentes</button><button class="big off"><svg><use href="#pub"/></svg>Publicar<br>geometría</button><button class="big"><svg><use href="#tab"/></svg>Tabla de<br>familia</button><div class="col"><button aria-label="Parámetros"><svg class="s"><use href="#brk"/></svg></button><button aria-label="Cotas"><svg class="s"><use href="#fx"/></svg></button><button aria-label="Relaciones"><svg class="s"><use href="#deq"/></svg></button></div></div><button class="gl">Intención de modelo</button></section>
<section class="grp inv"><div class="gb"><button class="big"><svg><use href="#list"/></svg>Lista de<br>materiales</button><button class="big"><svg><use href="#chain"/></svg>Visualizador<br>de referencias</button></div><button class="gl">Investigar</button></section>
</div>
<div class="work">
<aside class="side wide">
<div class="ptabs"><button class="on" aria-label="Árbol"><svg class="s"><use href="#tree"/></svg></button><button aria-label="Carpetas"><svg class="s"><use href="#fold"/></svg></button></div>
<div class="pbar"><svg class="s"><use href="#grn"/></svg><svg class="dots"><use href="#dots"/></svg><button aria-label="Expandir"><svg class="s"><use href="#expd"/></svg></button><button aria-label="Contraer"><svg class="s"><use href="#clps"/></svg></button><button class="pressed dim" aria-label="Columnas"><svg class="s"><use href="#cols"/></svg></button><i class="vr"></i><button aria-label="Filtros"><svg class="s"><use href="#ftr"/></svg></button><button aria-label="Configurar"><svg class="s"><use href="#cols2"/></svg></button><i class="vr"></i><button aria-label="Opciones"><svg class="s"><use href="#gear"/></svg></button><button aria-label="Capas"><svg class="s"><use href="#lay"/></svg></button><button aria-label="Nodos"><svg class="s"><use href="#nodes"/></svg></button><button class="end" aria-label="Informe"><svg class="s"><use href="#doc"/></svg></button></div>
<div class="filter"><svg class="s"><use href="#fun"/></svg><span class="field"><input type="text" aria-label="Filtrar árbol"><svg class="s"><use href="#x"/></svg></span><button class="dd" aria-label="Filtros recientes"></button><button aria-label="Añadir"><svg class="s"><use href="#plus"/></svg></button></div>
<ul class="tree t1">
<li><svg class="s"><use href="#asm"/></svg>TD-W9691-054-DEMO.ASM</li>
<li class="ref"><i class="tk"></i><svg class="s"><use href="#csys"/></svg>TD-W9691-054</li>
<li class="ref"><i class="tk"></i><svg class="s"><use href="#pln"/></svg>TOP</li>
<li class="ref"><i class="tk"></i><svg class="s"><use href="#pln"/></svg>SIDE</li>
<li class="ref"><i class="tk"></i><svg class="s"><use href="#pln"/></svg>FRONT</li>
<li class="ref"><i class="tk"></i><svg class="s"><use href="#axis"/></svg>AA_1</li>
<li><i class="tg"></i><svg class="s"><use href="#part"/></svg>TP-W9691-054-011_.PRT</li>
<li><i class="tg"></i><svg class="s"><use href="#part"/></svg>47660009001_.PRT</li>
<li><i class="tg"></i><svg class="s"><use href="#part"/></svg>TP-W9691-054-012_.PRT</li>
<li><i class="tg"></i><svg class="s"><use href="#ptn"/></svg>Patrón 1 de TP-W9691-054-052_.PRT</li>
<li><i class="tg"></i><svg class="s"><use href="#part"/></svg>TP-W9691-054-625_.PRT</li>
<li><i class="tg"></i><svg class="s"><use href="#part"/></svg>TP-W9691-054-500_.PRT</li>
<li><i class="tg"></i><svg class="s"><use href="#part"/></svg>TP-W9691-054-086_.PRT</li>
<li><i class="tg"></i><svg class="s"><use href="#part"/></svg>TP-W9691-054-24A_.PRT</li>
<li><i class="tg"></i><svg class="s"><use href="#part"/></svg>TP-W9691-054-24B_.PRT</li>
<li><i class="tg"></i><svg class="s"><use href="#part"/></svg>TP-W9691-054-57A_.PRT</li>
<li><i class="tg"></i><svg class="s"><use href="#ptn"/></svg>Patrón 2 de TP-W9691-054-053_.PRT</li>
<li><i class="tg"></i><svg class="s"><use href="#part"/></svg>TP-W9691-054-80_.PRT</li>
<li><i class="tg"></i><svg class="s"><use href="#part"/></svg>TP-W9691-054-258_.PRT</li>
<li><i class="tg"></i><svg class="s"><use href="#part"/></svg>TP-W9691-054-246_.PRT</li>
<li><i class="tg"></i><svg class="s"><use href="#part"/></svg>TP-W9691-054-57B_.PRT</li>
<li><i class="tg"></i><svg class="s"><use href="#part"/></svg>TP-W9691-054-57C_.PRT</li>
<li><i class="tg"></i><svg class="s"><use href="#ptn"/></svg>Patrón 3 de TP-W9691-054-901_.PRT</li>
<li><i class="tg"></i><svg class="s"><use href="#ptn"/></svg>Patrón 4 de TP-W9691-054-901_.PRT</li>
<li><i class="tg"></i><svg class="s"><use href="#shapes"/></svg>STATOR_SCREWS</li>
<li><i class="tg"></i><svg class="s"><use href="#shapes"/></svg>BOBBIN_SCREWS</li>
</ul>
<hr class="insert">
<ul class="tree secs">
<li><i class="tg open"></i><svg class="s"><use href="#scn"/></svg>Secciones</li>
<li><i></i><i class="tk last"></i><svg class="s"><use href="#scn"/></svg>Z</li>
</ul>
</aside>
<div class="canvas">
<nav class="vbar"><button aria-label="Reencuadrar"><svg class="s"><use href="#zf"/></svg></button><button aria-label="Aumentar"><svg class="s"><use href="#zi"/></svg></button><button aria-label="Reducir"><svg class="s"><use href="#zo"/></svg></button><button aria-label="Redibujar"><svg class="s"><use href="#rp"/></svg></button><button class="mn" aria-label="Aspecto"><svg class="s"><use href="#ap"/></svg></button><button class="mn" aria-label="Estilo"><svg class="s"><use href="#sty"/></svg></button><button aria-label="Visibilidad"><svg class="s"><use href="#eye"/></svg></button><button class="mn" aria-label="Orientaciones"><svg class="s"><use href="#sv"/></svg></button><button aria-label="Gestor de vistas"><svg class="s"><use href="#mview"/></svg></button><button aria-label="Perspectiva"><svg class="s"><use href="#per"/></svg></button><button class="mn" aria-label="Secciones"><svg class="s"><use href="#cut"/></svg></button><button class="mn" aria-label="Referencias"><svg class="s"><use href="#dtm"/></svg></button><button class="pressed" aria-label="Anotaciones"><svg class="s"><use href="#ann"/></svg></button><button aria-label="Centro de giro"><svg class="s"><use href="#spin"/></svg></button><button aria-label="Simulación"><svg class="s"><use href="#tri"/></svg></button><button aria-label="Pausa"><svg class="s"><use href="#pau"/></svg></button><button aria-label="Reanudar"><svg class="s"><use href="#res"/></svg></button></nav>
<svg class="motor m1" viewBox="0 0 1568 1568" preserveAspectRatio="none" stroke-linejoin="round">
<g stroke="#1d1d1d" stroke-width="2">
<path d="M705,428 L755,408 L757,390 L845,360 L850,348 L1075,268 Q1108,270 1115,335 L1155,388 L1185,384 L1228,455 L1340,722 L1370,828 L1362,850 L1388,1005 L1408,1010 Q1428,1035 1427,1085 L1392,1105 L1388,1215 Q1405,1245 1398,1288 L1175,1367 L1158,1355 L1158,1100 L900,600 L720,465z" fill="url(#bk)"/>
<path d="M850,348 L1075,268 Q1105,270 1113,325 L890,400 Q880,365 850,348z" fill="#484848"/>
<path d="M890,405 L998,372 L1050,440 L945,432z" fill="#2d2d2d"/>
<path d="M998,372 L1100,328 L1155,388 L1048,428z" fill="#454545"/>
</g>
<path id="s1" d="M715,465 L880,412 L945,430 Q1110,600 1160,850 Q1200,960 1200,1100 L1198,1250 L1165,1340 L962,1425 L940,1400 L1000,1350 Q1010,1100 930,850 Q850,610 715,465z" fill="url(#stt)"/>
<path d="M715,465 L880,412 L945,430 Q1110,600 1160,850 Q1200,960 1200,1100 L1198,1250 L1165,1340 L962,1425 L940,1400 L1000,1350 Q1010,1100 930,850 Q850,610 715,465z" fill="url(#lam)" opacity=".75"/>
<path d="M930,825 L1132,758 L1140,792 L945,855z" fill="#333b45"/><path d="M930,825L1132,758M940,852L1140,790M955,888L1150,822" stroke="#15181c" stroke-width="4"/>
<path d="M1003,1350L1168,1290M1003,1365L1165,1307" stroke="#222" stroke-width="3"/>
<path d="M703,428 L870,376 Q885,380 880,412 L717,464z" fill="#3f3f3f" stroke="#1d1d1d" stroke-width="2"/>
<path d="M955,425 L1005,408 L1030,435 L990,470z" fill="#e00"/><path d="M965,430l12,10 15-20 10,18 18-25M970,450l20-5 20,5" fill="none" stroke="#600" stroke-width="4"/>
<path d="M1000,440 L1060,500 L1225,760 L1225,860 L1180,860 L1130,680z" fill="#343434"/>
<path d="M1225,905 L1258,905 L1275,1030 L1200,1045 L1195,920z" fill="#2c2c2c" stroke="#111" stroke-width="2"/><path d="M1178,1195 L1280,1170 L1275,1255 L1200,1245z" fill="#2c2c2c" stroke="#111" stroke-width="2"/>
<path d="M950,428 Q1110,610 1150,800 Q1190,930 1205,1036" fill="none" stroke="#f00000" stroke-width="17"/>
<path d="M1015,485 Q1115,610 1150,745 L1210,1030" fill="none" stroke="#5a3c10" stroke-width="9"/>
<path d="M1015,485 Q1115,610 1150,745 L1210,1030" fill="none" stroke="#d49a35" stroke-width="6"/>
<g fill="#e80000" stroke="#500" stroke-width="3"><path d="M1020,480l25-10 22,35-5,30-20-15z"/><path d="M1065,545l20-5 35,55-20,25z"/><path d="M1115,650l30-20 18,55-25,22z"/><path d="M1150,745l28-10 28,75-25,15z"/><path d="M1185,865l30-8v20l-25,5z"/><path d="M1208,955l25-5 15,60-35,20z"/><path d="M1208,1195l35-10 5,45-45,18z"/></g>
<g fill="none" stroke="#c98f2d" stroke-width="7"><path d="M1090,550l20,10-5,25M1145,735l25-5M1190,760l8,30M1205,940q30,0 40,35M1210,1215l30-10"/></g>
<g fill="#e29a98" stroke="#8d5553" stroke-width="2"><path d="M1103,553l28-10 18,45-25,10z"/><path d="M1188,745l25-10 12,32-30,10z"/><path d="M1240,985l18-5v30l-12,8z"/></g>
<path d="M950,470 L1050,440 L1058,462 L975,490 L960,490z" fill="#303030" stroke="#111" stroke-width="2"/>
<path d="M1140,900 L1150,885 L1360,825 L1362,850 L1160,938 L1145,935z" fill="#383838" stroke="#111" stroke-width="2"/>
<path d="M1050,440 L1185,385 L1228,455 L1085,498z" fill="#474747" stroke="#111" stroke-width="2"/><path d="M1228,455L1115,490 1225,770 1342,722" fill="none" stroke="#111" stroke-width="2"/>
<g stroke="#111" stroke-width="2"><path d="M1172,1062 L1388,1006 Q1428,1020 1427,1085 L1195,1160 Q1170,1110 1172,1062z" fill="url(#bk)"/><path d="M1178,1160l14,10v20l-14,8z" fill="#333"/><path d="M1160,1300 L1380,1220 Q1405,1245 1398,1288 L1175,1367 Q1155,1345 1160,1300z" fill="url(#bk)"/><path d="M1015,1162 L1180,1112 L1188,1150 L1025,1202z" fill="#444"/><path d="M920,1402l32-10 5,30-30,10z" fill="#333"/></g>
<path d="M460,485 L683,406 L703,428 L715,463 Q850,570 930,840 Q1000,1000 1003,1140 L1025,1180 L1022,1230 L1012,1245 Q1010,1320 992,1378 L930,1425 L780,1478 L630,1527 L605,1522 L560,1465 L525,1440 L523,1400 Q430,1280 395,1140 L355,1010 L333,985 L318,935 L330,900 L303,820 L300,755 L322,745 Q330,650 390,598 L373,540z" fill="url(#al)" stroke="#555" stroke-width="2.500"/>
<path d="M460,485 L683,406 L703,428 L490,500z" fill="#fafafa"/><path d="M475,515 L705,432M490,540 L717,464" stroke="#555" stroke-width="2"/>
<path d="M845,628 L788,645 Q775,780 885,870 L940,855" fill="none" stroke="#777" stroke-width="2"/>
<ellipse cx="535" cy="1040" rx="186" ry="446" transform="rotate(-14 535 1040)" fill="#bcbcbc" stroke="#666" stroke-width="9"/>
<ellipse cx="535" cy="1040" rx="184" ry="444" transform="rotate(-14 535 1040)" fill="none" stroke="#f2f2f2" stroke-width="6"/>
<path d="M455,625 Q560,660 640,880 Q740,1180 735,1390" fill="none" stroke="#666" stroke-width="16"/><path d="M455,625 Q560,660 640,880 Q740,1180 735,1390" fill="none" stroke="#f4f4f4" stroke-width="11"/>
<path d="M440,562 L470,580 L470,630 L530,612 Q600,690 660,820 Q720,970 748,1133 L840,1105 L872,1108 Q872,1125 855,1132 L722,1175 L722,1230 L695,1160 Q690,1000 630,830 Q560,680 480,620 L445,600z" fill="#dedede" stroke="#666" stroke-width="2"/>
<path d="M470,585 L608,542 L612,580 L470,630z" fill="#999" stroke="#555" stroke-width="2"/>
<path d="M440,562 L605,535 Q628,528 630,560 Q760,700 830,960 L868,1105" fill="none" stroke="#666" stroke-width="15"/><path d="M440,565 L605,536 Q628,530 630,560 Q760,700 830,960 L868,1105 Q865,1120 850,1125 L710,1170" fill="none" stroke="#f2f2f2" stroke-width="10"/>
<path d="M528,612 L622,584 Q710,680 775,850 Q825,990 840,1105 L748,1133 Q715,960 660,820 Q600,690 528,612z" fill="#e20000" stroke="#500" stroke-width="3"/>
<path d="M605,590 Q700,680 760,850 Q810,990 822,1105" fill="none" stroke="#700" stroke-width="3"/>
<g fill="#8c0000"><path d="M590,690l65-35 5,35-50,20zM630,750l65-40v35l-60,35zM658,810l68-25v20l-60,35zM690,885l65-30v20l-62,20z"/></g>
<g fill="none" stroke="#3a0000" stroke-width="4"><path d="M555,640l65-20M585,685l75-27M618,743l75-28M655,808l72-24M685,885l75-28M710,965l78-25M735,1045l75-25M745,1120l60-35M590,600l38,65M625,670l30,35M693,715l30,70M727,785l32,75M757,860l28,80"/></g>
<g fill="#bbb" stroke="#555" stroke-width="13"><path d="M352,650 Q370,620 415,620 L435,720 L405,750z"/><path d="M445,635 Q530,680 590,830 L572,880 Q520,790 460,740z"/><path d="M340,690 Q370,740 385,800 L372,860 L340,860z"/><path d="M610,890 Q670,1050 690,1215 L645,1160 Q630,1030 595,930z"/><path d="M440,1230 Q480,1290 530,1320 L550,1410 Q470,1330 440,1230z"/><path d="M567,1330 L635,1335 L675,1410 Q650,1450 580,1440z"/><path d="M655,1225 L690,1260 Q700,1350 690,1390 L640,1310z"/><path d="M345,920l20,95-22-35z"/></g>
<g fill="none" stroke="#f6f6f6" stroke-width="8"><path d="M352,650 Q370,620 415,620 L435,720 L405,750z"/><path d="M445,635 Q530,680 590,830 L572,880 Q520,790 460,740z"/><path d="M340,690 Q370,740 385,800 L372,860 L340,860z"/><path d="M610,890 Q670,1050 690,1215 L645,1160 Q630,1030 595,930z"/><path d="M440,1230 Q480,1290 530,1320 L550,1410 Q470,1330 440,1230z"/><path d="M567,1330 L635,1335 L675,1410 Q650,1450 580,1440z"/><path d="M655,1225 L690,1260 Q700,1350 690,1390 L640,1310z"/><path d="M345,920l20,95-22-35z"/></g>
<ellipse cx="513" cy="1038" rx="104" ry="297" transform="rotate(-14 513 1038)" fill="#c2c2c2" stroke="#777" stroke-width="14"/><ellipse cx="513" cy="1038" rx="104" ry="297" transform="rotate(-14 513 1038)" fill="none" stroke="#eee" stroke-width="8"/>
<path d="M400,850 L475,825 Q560,850 605,1020 Q625,1130 610,1225 L510,1260z" fill="url(#hb)" stroke="#666" stroke-width="2"/>
<ellipse cx="455" cy="1055" rx="78" ry="210" transform="rotate(-14 455 1055)" fill="#d8d8d8" stroke="#666" stroke-width="3"/><ellipse cx="455" cy="1052" rx="70" ry="192" transform="rotate(-14 455 1052)" fill="none" stroke="#fafafa" stroke-width="7"/>
<ellipse cx="455" cy="1050" rx="56" ry="170" transform="rotate(-14 455 1050)" fill="#8d9aa6" stroke="#333" stroke-width="3"/>
<g fill="none" stroke="#aab0d0" stroke-width="11"><ellipse cx="465" cy="1055" rx="45" ry="135" transform="rotate(-14 465 1055)"/></g><g fill="none" stroke="#333c50" stroke-width="2"><ellipse cx="465" cy="1055" rx="52" ry="145" transform="rotate(-14 465 1055)"/><ellipse cx="465" cy="1055" rx="38" ry="120" transform="rotate(-14 465 1055)"/><ellipse cx="467" cy="1055" rx="32" ry="100" transform="rotate(-14 467 1055)"/><path d="M395,945q40,0 55,50M400,975q35-10 55,30M410,910q30,30 30,85M430,900q20,30 20,70"/></g>
<ellipse cx="475" cy="1050" rx="33" ry="85" transform="rotate(-14 475 1050)" fill="#66788c" stroke="#26303b" stroke-width="3"/>
<path d="M440,992 Q480,990 493,1060 Q496,1095 483,1110 L400,1138 L295,1175 L148,1225 Q110,1215 100,1160 Q95,1125 115,1112 L270,1060 L345,1030z" fill="url(#sh)" stroke="#333" stroke-width="3"/>
<path d="M120,1118L340,1045 285,1095 135,1140M150,1165L360,1095 300,1145 140,1195M355,1028q35,35 40,110M410,1003q35,35 38,118M270,1060q30,50 30,112M125,1165l160-50M130,1205l170-50" fill="none" stroke="#30302e" stroke-width="3"/><path d="M125,1150L300,1095M140,1205L300,1155" stroke="#4a4a48" stroke-width="9"/>
<circle cx="119" cy="1170" r="9" fill="#eee" stroke="#333" stroke-width="3"/>
<path d="M780,1212 L1003,1142 Q1028,1160 1022,1230 L800,1312z" fill="url(#hb)" stroke="#666" stroke-width="2"/><path d="M722,1232 L780,1212 Q802,1240 798,1310 L985,1250" fill="none" stroke="#555" stroke-width="2"/>
<path d="M710,1310 L738,1335 L738,1380 L990,1290 L985,1250 L770,1320z" fill="#9b9b9b"/>
<path d="M745,1385 L850,1345 Q840,1400 780,1406z" fill="#d80000" stroke="#500" stroke-width="2"/><path d="M738,1380 L885,1335 Q880,1430 800,1478 Q770,1470 690,1475" fill="none" stroke="#eee" stroke-width="8"/><path d="M765,1430l5,50M620,1480l15,45M630,1495L765,1445" stroke="#555" stroke-width="3"/>
<g fill="#363636" stroke="#111" stroke-width="3"><path d="M405,520 L455,500 L475,550 L435,580 L412,565z"/><ellipse cx="420" cy="548" rx="15" ry="33" transform="rotate(-12 420 548)"/><path d="M720,1245 L768,1235 Q795,1270 785,1300 L740,1318z"/><ellipse cx="735" cy="1282" rx="15" ry="35" transform="rotate(-12 735 1282)"/><ellipse cx="313" cy="858" rx="15" ry="36" transform="rotate(-12 313 858)"/><path d="M568,1460l25-5 12,65-15,10z"/><ellipse cx="580" cy="1494" rx="14" ry="36" transform="rotate(-12 580 1494)"/></g>
<g fill="#111"><ellipse cx="418" cy="548" rx="7" ry="14"/><ellipse cx="733" cy="1282" rx="7" ry="14"/><ellipse cx="311" cy="858" rx="6" ry="14"/><ellipse cx="578" cy="1494" rx="6" ry="14"/></g>
</svg>
</div>
</div>
<footer class="status"><button class="pressed" aria-label="Panel"><svg class="s"><use href="#st1"/></svg></button><button aria-label="Navegador"><svg class="s"><use href="#glb"/></svg></button><button aria-label="Pantalla completa"><svg class="s"><use href="#scr"/></svg></button><i class="vr"></i><span class="msg"></span><span class="right"><i class="vr"></i><button class="dd" aria-label="Buscar en modelo"><svg class="s"><use href="#bin"/></svg></button><i class="vr"></i><button class="dd" aria-label="Selección por área"><svg class="s"><use href="#dsh"/></svg></button><button class="dim" aria-label="Selección"><svg class="s"><use href="#slc"/></svg></button><button class="boxed" aria-label="Geometría de componente"><svg><use href="#cbs"/></svg></button></span><span class="sel"><select aria-label="Filtro de selección"><option>Geometría</option></select></span></footer>
</section>
<figcaption class="cap1">Original Assembly</figcaption>
</figure>

<figure class="shot">
<section class="window">
<header class="title"><span class="brand"><svg class="s"><use href="#part"/></svg>creo<sup>•</sup></span>
<nav class="quick"><button aria-label="Nuevo"><svg class="s"><use href="#new"/></svg></button><button aria-label="Abrir"><svg class="s"><use href="#open"/></svg></button><button aria-label="Guardar"><svg class="s"><use href="#save"/></svg></button><button class="dd" aria-label="Deshacer"><svg class="s"><use href="#undo"/></svg></button><button class="dd" aria-label="Rehacer"><svg class="s"><use href="#redo"/></svg></button><button aria-label="Regenerar"><svg class="s"><use href="#regens"/></svg></button><button class="dd" aria-label="Ventanas"><svg class="s"><use href="#wins"/></svg></button><button aria-label="Cerrar"><svg class="s"><use href="#cls"/></svg></button><button class="more dd" aria-label="Personalizar"></button></nav>
<h1>SW_TD-W-054-MB (Activo) - Creo Parametric</h1>
<span class="wctl"><button aria-label="Minimizar"><svg class="s"><use href="#min"/></svg></button><button aria-label="Maximizar"><svg class="s"><use href="#max"/></svg></button><button aria-label="Cerrar ventana"><svg class="s"><use href="#wx"/></svg></button></span></header>
<nav class="tabs"><button class="file">Fichero</button><button class="on">Modelo</button><button>Análisis</button><button>Simulación en directo</button><button>Anotar</button><button>Herramientas</button><button>Vista</button><button>Aplicaciones</button><span class="tools"><button aria-label="Minimizar cinta"><svg class="s"><use href="#chev"/></svg></button><button aria-label="Buscar"><svg class="s"><use href="#mag"/></svg></button><button class="dd" aria-label="Aprendizaje"><svg class="s"><use href="#cap"/></svg></button><button>?</button></span></nav>
<div class="ribbon">
<section class="grp ops"><div class="gb"><button class="big dd"><svg><use href="#regen"/></svg>Regenerar</button><div class="col"><button class="off" aria-label="Copiar"><svg class="s"><use href="#copy"/></svg></button><button class="off dd" aria-label="Pegar"><svg class="s"><use href="#paste"/></svg></button><button class="off dd" aria-label="Suprimir"><svg class="s"><use href="#del"/></svg></button></div></div><button class="gl">Operaciones</button></section>
<section class="grp data"><div class="gb"><div class="col mid"><button aria-label="Función de usuario"><svg class="s"><use href="#shapes"/></svg></button><button class="dim" aria-label="Copiar geometría"><svg class="s"><use href="#shr"/></svg></button><button class="dim" aria-label="Desabstracción"><svg class="s"><use href="#shr"/></svg></button></div></div><button class="gl">Obtener datos</button></section>
<section class="grp cuerpo"><div class="gb"><div class="col mid"><button aria-label="Operaciones booleanas"><svg class="s"><use href="#bool"/></svg></button><button aria-label="Dividir cuerpo"><svg class="s"><use href="#spb"/></svg></button><button aria-label="Nuevo cuerpo"><svg class="s"><use href="#nbody"/></svg></button></div></div><button class="gl">Cuerpo</button></section>
<section class="grp datum"><div class="gb"><button class="big"><svg><use href="#plane"/></svg>Plano</button><div class="col"><button><svg class="s"><use href="#axis"/></svg>Eje</button><button class="dd"><svg class="s"><use href="#pt"/></svg>Punto</button><button><svg class="s"><use href="#csys"/></svg>Sistema de coordenadas</button></div><button class="big"><svg><use href="#sket"/></svg>Esbozo</button></div><button class="gl">Datos de ref.</button></section>
<section class="grp formas"><div class="gb"><button class="big"><svg><use href="#extb"/></svg>Extruir</button><div class="col"><button><svg class="s"><use href="#rev"/></svg>Revolución</button><button class="dd"><svg class="s"><use href="#swp"/></svg>Barrido</button><button><svg class="s"><use href="#swb"/></svg>Mezcla barrida</button></div></div><button class="gl">Formas</button></section>
<section class="grp ing"><div class="gb"><div class="col"><button><svg class="s"><use href="#hole"/></svg>Taladro</button><button class="dd"><svg class="s"><use href="#rnd"/></svg>Redondeo</button><button class="dd"><svg class="s"><use href="#chf"/></svg>Chaflán</button></div><div class="col"><button class="dd"><svg class="s"><use href="#drf"/></svg>Inclinación</button><button><svg class="s"><use href="#shl"/></svg>Cáscara</button><button class="dd"><svg class="s"><use href="#rib"/></svg>Nervio</button></div></div><button class="gl">Ingeniería</button></section>
<section class="grp edi"><div class="gb"><button class="big dd"><svg><use href="#pat"/></svg>Patrón</button><div class="col"><button class="dim"><svg class="s"><use href="#mir"/></svg>Simetría</button><button><svg class="s"><use href="#trim"/></svg>Recortar</button><button class="dim"><svg class="s"><use href="#trim"/></svg>Combinar</button></div><div class="col"><button class="dim"><svg class="s"><use href="#off"/></svg>Extender</button><button><svg class="s"><use href="#off"/></svg>Desvío</button><button><svg class="s"><use href="#int"/></svg>Intersección</button></div><div class="col"><button><svg class="s"><use href="#prj"/></svg>Proyectar</button><button class="dim"><svg class="s"><use href="#thk"/></svg>Aumentar espesor</button><button><svg class="s"><use href="#sol"/></svg>Solidificación</button></div><div class="col"><button><svg class="s"><use href="#rem"/></svg>Quitar</button><button class="dd"><svg class="s"><use href="#spl"/></svg>Dividir</button><button><svg class="s"><use href="#uni"/></svg>Unificar superficies</button></div></div><button class="gl">Edición</button></section>
<section class="grp sup"><div class="gb"><button class="big"><svg><use href="#bnd"/></svg>Mezcla<br>de límites</button><div class="col"><button aria-label="Relleno"><svg class="s"><use href="#fill"/></svg></button><button aria-label="Estilo de superficie"><svg class="s"><use href="#ssf"/></svg></button><button aria-label="Forma libre"><svg class="s"><use href="#fsf"/></svg></button></div></div><button class="gl">Superficies</button></section>
<section class="grp int2"><div class="gb"><button class="big"><svg><use href="#intf"/></svg>Interfaz de<br>componentes</button></div><button class="gl">Intención de modelo</button></section>
</div>
<div class="work">
<aside class="side narrow">
<div class="ptabs"><button class="on" aria-label="Árbol"><svg class="s"><use href="#tree"/></svg></button><button aria-label="Carpetas"><svg class="s"><use href="#fold"/></svg></button></div>
<div class="pbar"><svg class="s"><use href="#grn"/></svg><svg class="dots"><use href="#dots"/></svg><button aria-label="Expandir"><svg class="s"><use href="#expd"/></svg></button><button aria-label="Contraer"><svg class="s"><use href="#clps"/></svg></button><button class="pressed" aria-label="Columnas"><svg class="s"><use href="#cols"/></svg></button><i class="vr"></i><button aria-label="Nuevo grupo"><svg class="s"><use href="#npk"/></svg></button><i class="vr"></i><button aria-label="Filtros"><svg class="s"><use href="#ftr"/></svg></button><button aria-label="Configurar"><svg class="s"><use href="#cols2"/></svg></button><i class="vr"></i><button class="chev">»</button><button class="end" aria-label="Informe"><svg class="s"><use href="#doc"/></svg></button></div>
<div class="filter"><svg class="s"><use href="#fun"/></svg><span class="field"><input type="text" aria-label="Filtrar árbol"><svg class="s"><use href="#x"/></svg></span><button class="dd" aria-label="Filtros recientes"></button><button aria-label="Añadir"><svg class="s"><use href="#plus"/></svg></button></div>
<div class="colhead"><span></span><span>-</span><span></span></div>
<div class="treebox">
<ul class="tree t2">
<li><svg class="s"><use href="#part"/></svg>SW_TD-W-054-MB.PRT</li>
<li><i class="tg open"></i><svg class="s"><use href="#des"/></svg>Elementos de diseño</li>
<li><i class="vl"></i><i class="tg"></i><svg class="s"><use href="#mat"/></svg>Materiales</li>
<li><i class="vl"></i><i class="tg open"></i><svg class="s"><use href="#bodies"/></svg>Cuerpos (201)</li>
<li><i class="vl"></i><i></i><i class="tk"></i><svg class="s"><use href="#body"/></svg>TP-W9691-054-011_</li>
<li><i class="vl"></i><i></i><i class="tg"></i><svg class="s"><use href="#body"/></svg>47660009001_</li>
<li><i class="vl"></i><i></i><i class="tk"></i><svg class="s"><use href="#body"/></svg>TP-W9691-054-012_</li>
<li><i class="vl"></i><i></i><i class="tk"></i><svg class="s"><use href="#body"/></svg>TP-W9691-054-052_</li>
<li><i class="vl"></i><i></i><i class="tk"></i><svg class="s"><use href="#body"/></svg>TP-W9691-054-052__1</li>
<li><i class="vl"></i><i></i><i class="tk"></i><svg class="s"><use href="#body"/></svg>TP-W9691-054-052__2</li>
<li><i class="vl"></i><i></i><i class="tk"></i><svg class="s"><use href="#body"/></svg>TP-W9691-054-052__3</li>
<li><i class="vl"></i><i></i><i class="tk"></i><svg class="s"><use href="#body"/></svg>TP-W9691-054-052__4</li>
<li><i class="vl"></i><i></i><i class="tk"></i><svg class="s"><use href="#body"/></svg>TP-W9691-054-052__5</li>
<li><i class="vl"></i><i></i><i class="tk"></i><svg class="s"><use href="#body"/></svg>TP-W9691-054-052__6</li>
<li><i class="vl"></i><i></i><i class="tk"></i><svg class="s"><use href="#body"/></svg>TP-W9691-054-052__7</li>
<li><i class="vl"></i><i></i><i class="tk"></i><svg class="s"><use href="#body"/></svg>TP-W9691-054-052__8</li>
<li><i class="vl"></i><i></i><i class="tk"></i><svg class="s"><use href="#body"/></svg>TP-W9691-054-052__9</li>
<li><i class="vl"></i><i></i><i class="tk"></i><svg class="s"><use href="#body"/></svg>TP-W9691-054-052__10</li>
<li><i class="vl"></i><i></i><i class="tk"></i><svg class="s"><use href="#body"/></svg>TP-W9691-054-052__11</li>
<li><i class="vl"></i><i></i><i class="tk"></i><svg class="s"><use href="#body"/></svg>TP-W9691-054-052__12</li>
<li><i class="vl"></i><i></i><i class="tk"></i><svg class="s"><use href="#body"/></svg>TP-W9691-054-052__13</li>
<li><i class="vl"></i><i></i><i class="tk"></i><svg class="s"><use href="#body"/></svg>TP-W9691-054-052__14</li>
<li><i class="vl"></i><i></i><i class="tk"></i><svg class="s"><use href="#body"/></svg>TP-W9691-054-052__15</li>
<li><i class="vl"></i><i></i><i class="tk"></i><svg class="s"><use href="#body"/></svg>TP-W9691-054-052__16</li>
<li><i class="vl"></i><i></i><i class="tk"></i><svg class="s"><use href="#body"/></svg>TP-W9691-054-052__17</li>
<li><i class="vl"></i><i></i><i class="tk"></i><svg class="s"><use href="#body"/></svg>TP-W9691-054-052__18</li>
<li><i class="vl"></i><i></i><i class="tk"></i><svg class="s"><use href="#body"/></svg>TP-W9691-054-052__19</li>
<li><i class="vl"></i><i></i><i class="tk"></i><svg class="s"><use href="#body"/></svg>TP-W9691-054-052__20</li>
<li><i class="vl"></i><i></i><i class="tk"></i><svg class="s"><use href="#body"/></svg>TP-W9691-054-052__21</li>
<li><i class="vl"></i><i></i><i class="tk"></i><svg class="s"><use href="#body"/></svg>TP-W9691-054-052__22</li>
<li><i class="vl"></i><i></i><i class="tk"></i><svg class="s"><use href="#body"/></svg>TP-W9691-054-052__23</li>
<li><i class="vl"></i><i></i><i class="tk"></i><svg class="s"><use href="#body"/></svg>TP-W9691-054-052__24</li>
<li><i class="vl"></i><i></i><i class="tk"></i><svg class="s"><use href="#body"/></svg>TP-W9691-054-052__25</li>
<li><i class="vl"></i><i></i><i class="tk"></i><svg class="s"><use href="#body"/></svg>TP-W9691-054-052__26</li>
<li><i class="vl"></i><i></i><i class="tk"></i><svg class="s"><use href="#body"/></svg>TP-W9691-054-052__27</li>
<li><i class="vl"></i><i></i><i class="tk"></i><svg class="s"><use href="#body"/></svg>TP-W9691-054-052__28</li>
<li><i class="vl"></i><i></i><i class="tk"></i><svg class="s"><use href="#body"/></svg>TP-W9691-054-052__29</li>
<li><i class="vl"></i><i></i><i class="tk"></i><svg class="s"><use href="#body"/></svg>TP-W9691-054-052__30</li>
<li><i class="vl"></i><i></i><i class="tk"></i><svg class="s"><use href="#body"/></svg>TP-W9691-054-052__31</li>
</ul>
<div class="colline"></div>
<div class="scroll"><button class="up" aria-label="Subir"></button><span class="thumb"></span><button class="down" aria-label="Bajar"></button></div>
</div>
</aside>
<div class="canvas">
<nav class="vbar"><button aria-label="Reencuadrar"><svg class="s"><use href="#zf"/></svg></button><button aria-label="Aumentar"><svg class="s"><use href="#zi"/></svg></button><button aria-label="Reducir"><svg class="s"><use href="#zo"/></svg></button><button aria-label="Redibujar"><svg class="s"><use href="#rp"/></svg></button><button class="mn" aria-label="Aspecto"><svg class="s"><use href="#ap"/></svg></button><button class="mn" aria-label="Estilo"><svg class="s"><use href="#sty"/></svg></button><button aria-label="Visibilidad"><svg class="s"><use href="#eye"/></svg></button><button class="mn" aria-label="Orientaciones"><svg class="s"><use href="#sv"/></svg></button><button aria-label="Gestor de vistas"><svg class="s"><use href="#mview"/></svg></button><button aria-label="Perspectiva"><svg class="s"><use href="#per"/></svg></button><button class="mn" aria-label="Secciones"><svg class="s"><use href="#cut"/></svg></button><button class="mn" aria-label="Referencias"><svg class="s"><use href="#dtm"/></svg></button><button aria-label="Anotaciones"><svg class="s"><use href="#ann"/></svg></button><button aria-label="Centro de giro"><svg class="s"><use href="#spin"/></svg></button><button aria-label="Simulación"><svg class="s"><use href="#tri"/></svg></button><button aria-label="Pausa"><svg class="s"><use href="#pau"/></svg></button><button aria-label="Reanudar"><svg class="s"><use href="#res"/></svg></button></nav>
<svg class="motor m2" viewBox="0 0 1568 1568" preserveAspectRatio="none" stroke-linejoin="round">
<g stroke="#161616" stroke-width="2">
<path d="M570,520 L660,465 L655,425 L730,385 L835,323 L890,318 L1070,397 L1140,453 L1150,497 L1255,615 L1285,610 Q1325,635 1325,680 L1310,700 L1385,860 Q1430,870 1437,915 L1410,950 L1415,1040 L1400,1130 Q1412,1150 1408,1182 L1175,1318 L1165,1290 L1070,1340 L1060,1250 L900,700 L590,548z" fill="url(#bk)"/>
<path d="M655,425 L800,385 L808,425 L665,480z" fill="#333"/><path d="M800,370 L890,318 L1070,397 L980,450z" fill="#4a4a4a"/><path d="M805,375 L980,450 L958,465 L1003,505 L945,545 L800,460z" fill="#2c2c2c"/><path d="M958,465 L1070,397 L1140,453 L1003,512z" fill="#4a4a4a"/><path d="M945,545 L1140,453 L1150,497 L985,615 L970,605z" fill="#343434"/>
<path d="M1010,605 L1068,560 L1145,650 L1088,690z" fill="#262626"/><path d="M1165,822 L1235,785 L1280,890 L1210,915z" fill="#262626"/><path d="M1235,1075 L1320,1028 L1310,1120 L1240,1165z" fill="#262626"/></g>
<path d="M590,540 L750,465 Q840,475 945,550 Q1110,690 1200,910 Q1250,1030 1245,1160 L1200,1240 L1080,1295 Q1090,1130 1040,1000 Q960,720 730,610z" fill="url(#stt)"/>
<path d="M590,540 L750,465 Q840,475 945,550 Q1110,690 1200,910 Q1250,1030 1245,1160 L1200,1240 L1080,1295 Q1090,1130 1040,1000 Q960,720 730,610z" fill="url(#lam2)" opacity=".75"/>
<path d="M590,540 L750,465 Q700,500 640,575z" fill="#12151a" opacity=".7"/>
<path d="M730,610L900,515M765,635L945,540" stroke="#111" stroke-width="7"/><path d="M1045,1065L1215,985M1080,1175L1245,1095M1080,1290L1245,1175" stroke="#15181c" stroke-width="6"/>
<path d="M1045,1070 L1215,985 L1230,1035 L1040,1130z" fill="#657280" opacity=".7"/>
<path d="M750,465 Q850,475 945,550 M1010,605 L1085,690 M1168,822 L1210,918 M1240,1075 L1250,1165" fill="none" stroke="#f00000" stroke-width="14"/>
<g fill="#e80000" stroke="#500" stroke-width="3"><path d="M750,460l30-8 10,15zM800,470l10-20 20,25zM830,475l15-25 15,35zM872,465l35-5 15,55-35-15zM930,530l15-35 20,30-10,20z"/><path d="M1020,600l35-15 15,25-15,20zM1070,655l25-25 25,40-25,10z"/><path d="M1185,835l35-20 30,70-35,15z"/><path d="M1250,1080l30-30 20,45-45,45z"/></g>
<g fill="none" stroke="#d49a35" stroke-width="6"><path d="M1015,610l75,75M1175,825l45,90M1215,905l30-12M955,525l20-12M1245,1160l20-25M1100,655l20-10"/></g>
<g fill="#e29a98" stroke="#8d5553" stroke-width="2"><path d="M838,458l20-25 8,8-15,22zM855,465l35-18 20,5-40,22zM965,520l25-15 5,10-18,15zM1225,840l15-10 8,35-15,10zM1108,648l14-8 6,15-12,8zM1288,1105l10-6-2,20-10,5z"/></g>
<g stroke="#111" stroke-width="2"><path d="M1055,700 L1270,612 Q1325,620 1325,680 L1125,780 Q1105,730 1055,700z" fill="url(#bk)"/><path d="M1110,770l20,15 140-65-10,40-125,75z" fill="#333"/><path d="M960,822 L1090,745 Q1110,750 1108,778 L970,852z" fill="#3f3f3f"/><path d="M1185,940 L1390,860 Q1437,870 1437,915 L1235,1040 Q1235,1000 1200,975z" fill="url(#bk)"/><path d="M1215,1205 L1400,1130 Q1412,1150 1408,1182 L1215,1290z" fill="url(#bk)"/><path d="M1070,1300 L1210,1230 L1215,1260 L1075,1335z" fill="#3a3a3a"/><path d="M1000,1105l30-15 15,45-30,15z" fill="#333"/><path d="M570,520 L660,465 L668,482 L585,545z" fill="#333"/></g>
<path d="M230,710 L440,595 Q520,540 580,548 L730,608 Q850,690 915,805 L970,845 L972,885 Q1040,990 1060,1110 Q1085,1200 1075,1310 L1077,1360 L885,1480 L860,1480 L765,1508 L735,1470 Q600,1490 465,1370 L415,1335 L410,1300 Q260,1130 230,870 L195,840 L197,790z" fill="url(#al)" stroke="#555" stroke-width="2.500"/>
<path d="M530,570L585,548M730,610L680,640Q560,625 530,570" fill="none" stroke="#777" stroke-width="2"/>
<path d="M235,715 L435,598 L370,640 L265,745" fill="none" stroke="#555" stroke-width="2"/>
<path d="M320,718 L440,655 Q560,635 745,810 L760,820 L655,870 L620,915 Q500,720 320,718z" fill="#9a9a9a" stroke="#555" stroke-width="2"/>
<path d="M370,640 Q480,590 600,650 Q700,720 760,800 L740,820" fill="none" stroke="#777" stroke-width="14"/><path d="M370,640 Q480,590 600,650 Q700,720 760,800 Q760,815 745,822 L640,885 L680,935" fill="none" stroke="#f4f4f4" stroke-width="10"/>
<path d="M440,665q40-12 70,0l-30,15z" fill="#8fa0b5"/><path d="M510,662l60,22" stroke="#c98f2d" stroke-width="9"/>
<path d="M405,697 Q440,660 500,668 Q640,700 737,825 L655,868 Q540,730 405,697z" fill="#e00000" stroke="#500" stroke-width="3"/><path d="M412,690Q520,650 700,838" fill="none" stroke="#600" stroke-width="3"/>
<g fill="#8a0000"><path d="M500,735l35-22 8,25-25,10zM540,765l45-30 10,25-30,20zM590,795l50-28v20l-30,20zM640,838l50-25-8,30-25,20z"/></g>
<g fill="none" stroke="#3a0000" stroke-width="4"><path d="M440,710l22-8M465,722l22-22 12,20M500,740l30-32 14,25M540,768l42-38 14,28M590,800l48-35 2,28M635,840l55-32"/></g>
<path d="M765,1080 L870,1030 Q900,1010 915,1060 Q970,1130 970,1330 L960,1345 L815,1400 L790,1380 L850,1350 Q850,1190 795,1075z" fill="#e4e4e4" stroke="#555" stroke-width="3"/>
<path d="M795,1075 L875,1032 Q965,1180 915,1322 L850,1355 Q850,1200 795,1075z" fill="#e00000" stroke="#500" stroke-width="3"/><path d="M862,1038Q935,1180 900,1325" fill="none" stroke="#600" stroke-width="3"/>
<g fill="#7c0000"><path d="M800,1095l55-20-20,25-30,5zM835,1165l50-30v20l-50,30zM845,1225l50-32-10,30-38,15z"/></g><path d="M800,1090l60-22M820,1125l62,5-60,30M838,1180l55,10-50,35M848,1240l52,10-50,25M848,1300l42-20M850,1340l40-25" fill="none" stroke="#3a0000" stroke-width="4"/>
<path d="M885,1020 Q905,1020 910,1050 Q975,1140 965,1335" fill="none" stroke="#888" stroke-width="13"/><path d="M885,1020 Q905,1020 910,1050 Q975,1140 965,1335 L800,1400" fill="none" stroke="#f6f6f6" stroke-width="8"/>
<ellipse cx="515" cy="1090" rx="253" ry="412" transform="rotate(-28 515 1090)" fill="#b9b9b9" stroke="#666" stroke-width="12"/><ellipse cx="515" cy="1090" rx="253" ry="412" transform="rotate(-28 515 1090)" fill="none" stroke="#ededed" stroke-width="8"/>
<path d="M290,730 Q370,690 450,730 Q590,800 660,930 Q800,1100 850,1355 L810,1390 Q830,1200 700,1000 Q520,710 290,730z" fill="#dcdcdc" stroke="#777" stroke-width="2"/>
<g fill="#bbb" stroke="#555" stroke-width="13"><path d="M262,795 Q330,740 410,760 L420,825 Q370,830 325,875z"/><path d="M445,785 Q570,840 650,985 L620,1000 Q570,900 470,850z"/><path d="M245,840 L318,910 L320,1005 L262,1000z"/><path d="M275,1050 L325,1060 L335,1125 Q300,1110 275,1050z"/><path d="M650,1045 L685,1030 Q740,1100 768,1215 L705,1185z"/><path d="M712,1235 L780,1255 Q800,1340 770,1395 L705,1330z"/><path d="M600,1360 L690,1350 L745,1430 Q700,1455 625,1445z"/><path d="M415,1280 L500,1300 L560,1340 L580,1425 Q480,1370 415,1280z"/></g>
<g fill="none" stroke="#f6f6f6" stroke-width="8"><path d="M262,795 Q330,740 410,760 L420,825 Q370,830 325,875z"/><path d="M445,785 Q570,840 650,985 L620,1000 Q570,900 470,850z"/><path d="M245,840 L318,910 L320,1005 L262,1000z"/><path d="M275,1050 L325,1060 L335,1125 Q300,1110 275,1050z"/><path d="M650,1045 L685,1030 Q740,1100 768,1215 L705,1185z"/><path d="M712,1235 L780,1255 Q800,1340 770,1395 L705,1330z"/><path d="M600,1360 L690,1350 L745,1430 Q700,1455 625,1445z"/><path d="M415,1280 L500,1300 L560,1340 L580,1425 Q480,1370 415,1280z"/></g>
<ellipse cx="515" cy="1100" rx="156" ry="258" transform="rotate(-28 515 1100)" fill="#c2c2c2" stroke="#777" stroke-width="13"/><ellipse cx="515" cy="1100" rx="156" ry="258" transform="rotate(-28 515 1100)" fill="none" stroke="#eee" stroke-width="8"/>
<path d="M365,965 Q400,930 440,922 Q560,930 640,1100 Q675,1200 640,1255 L560,1300z" fill="url(#hb)" stroke="#666" stroke-width="2"/>
<ellipse cx="461" cy="1131" rx="116" ry="182" transform="rotate(-28 461 1131)" fill="#d5d5d5" stroke="#666" stroke-width="3"/><ellipse cx="461" cy="1131" rx="103" ry="168" transform="rotate(-28 461 1131)" fill="none" stroke="#fafafa" stroke-width="8"/>
<ellipse cx="464" cy="1129" rx="83" ry="144" transform="rotate(-28 464 1129)" fill="#8797a6" stroke="#333" stroke-width="3"/><ellipse cx="470" cy="1125" rx="70" ry="122" transform="rotate(-28 470 1125)" fill="#aeb2d2" stroke="#333c50" stroke-width="2"/>
<g fill="none" stroke="#39415a" stroke-width="2"><ellipse cx="472" cy="1125" rx="62" ry="108" transform="rotate(-28 472 1125)"/><ellipse cx="474" cy="1124" rx="54" ry="92" transform="rotate(-28 474 1124)"/><path d="M375,1010q40-20 90,30M375,1060q20,50 60,90"/></g><circle cx="383" cy="1043" r="24" fill="#8494a4" stroke="#333" stroke-width="2"/><circle cx="381" cy="1043" r="9" fill="#ccd" stroke="#333" stroke-width="2"/>
<ellipse cx="478" cy="1122" rx="43" ry="66" transform="rotate(-28 478 1122)" fill="#66788c" stroke="#26303b" stroke-width="3"/>
<path d="M410,1095 L450,1077 Q500,1085 510,1140 Q512,1165 500,1178 L400,1228 L330,1268 L202,1343 L170,1330 L155,1312 L135,1270 L140,1250 L165,1240 L300,1160z" fill="url(#sh)" stroke="#333" stroke-width="3"/>
<path d="M170,1245L365,1155 315,1205 195,1262M190,1295L398,1195 330,1265 200,1330M345,1135q50,30 55,95M410,1098q55,40 58,95M300,1160q30,30 35,100" fill="none" stroke="#30302e" stroke-width="3"/><path d="M185,1275L330,1200" stroke="#4a4a48" stroke-width="10"/><ellipse cx="165" cy="1297" rx="9" ry="13" fill="#eee" stroke="#333" stroke-width="3"/>
<path d="M735,918 L915,805 Q975,830 972,885 L775,1000 Q775,940 735,918z" fill="url(#hb)" stroke="#666" stroke-width="2"/><path d="M665,945 Q670,1010 735,1025 L975,885" fill="none" stroke="#999" stroke-width="9"/><path d="M690,935 Q750,900 770,950 Q785,990 760,1015" fill="none" stroke="#f4f4f4" stroke-width="9"/>
<path d="M815,1400 L840,1440 L1070,1330 L1060,1290z" fill="#8c8c8c"/><path d="M860,1445 L1070,1330 L1077,1360 L880,1482z" fill="url(#hb)" stroke="#666" stroke-width="2"/>
<g fill="#363636" stroke="#111" stroke-width="3"><path d="M190,740 L230,720 L240,770 L215,800z"/><ellipse cx="209" cy="766" rx="22" ry="32" transform="rotate(-28 209 766)"/><path d="M685,955 L735,935 Q770,960 755,990 L725,1010z"/><ellipse cx="706" cy="982" rx="22" ry="32" transform="rotate(-28 706 982)"/><path d="M785,1445 L835,1437 L860,1455 L855,1485 L820,1500z"/><ellipse cx="806" cy="1471" rx="22" ry="32" transform="rotate(-28 806 1471)"/><ellipse cx="378" cy="1285" rx="20" ry="34" transform="rotate(-28 378 1285)"/></g><g fill="#111"><ellipse cx="208" cy="766" rx="9" ry="13"/><ellipse cx="704" cy="982" rx="9" ry="13"/><ellipse cx="804" cy="1471" rx="9" ry="13"/><ellipse cx="374" cy="1285" rx="9" ry="13"/></g>
</svg>
</div>
</div>
<footer class="status"><button class="pressed" aria-label="Panel"><svg class="s"><use href="#st1"/></svg></button><button aria-label="Navegador"><svg class="s"><use href="#glb"/></svg></button><button aria-label="Pantalla completa"><svg class="s"><use href="#scr"/></svg></button><i class="vr"></i><span class="msg"><b>•</b> No se mostrarán los planos de referencia.</span><span class="right r2"><i class="vr"></i><button class="dd" aria-label="Buscar en modelo"><svg class="s"><use href="#bin"/></svg></button><i class="vr"></i><button class="dd" aria-label="Selección por área"><svg class="s"><use href="#dsh"/></svg></button><button aria-label="Selección"><svg class="s"><use href="#slc"/></svg></button></span><span class="sel"><select aria-label="Filtro de selección"><option>Geometría</option></select></span></footer>
</section>
<figcaption class="cap2">Resulting Multibody Part</figcaption>
</figure>
</main>
</body>
</html>
```
FILE: styles.css
```css
* { box-sizing: border-box; }
body { margin: 0; background: #fff; color: #4a4d4f; font: 11px/16px "Noto Sans", "Open Sans", sans-serif; }
button { border: 0; margin: 0; padding: 0; background: none; color: inherit; font: inherit; display: flex; align-items: center; white-space: nowrap; }
svg { display: block; flex: none; width: 32px; height: 32px; }
svg.s { width: 16px; height: 16px; }
svg.defs { position: absolute; width: 0; height: 0; }
i { font-style: normal; flex: none; }
.page { display: flex; min-height: 100vh; padding-left: 2px; }
.shot { flex: 1; min-width: 0; margin: 0; height: 100vh; display: flex; flex-direction: column; }
.window { flex: 1; min-height: 0; display: flex; flex-direction: column; padding: 3px; border: 1px solid #302f33; background: #9b9b9c; }
figcaption { height: 144px; display: flex; align-items: center; justify-content: center; color: #000; font: 38px/44px "Liberation Sans", Arial, sans-serif; text-shadow: 2px 3px 4px #c99fb0; }
.cap1 { padding-left: 120px; }
.cap2 { padding-right: 232px; }

/* small drop-down arrow shared by menu buttons */
.dd::after, .ddi::after, .gl::after { content: ""; flex: none; width: 0; height: 0; border: 3px solid transparent; border-top: 5px solid #555; border-bottom: 0; margin-left: 8px; }
.off { color: #b5b7b9; }
.off.dd::after { border-top-color: #b5b7b9; }
.dim { color: #b5b7b9; }
.dim svg { filter: grayscale(1) opacity(.55); }
.vr { width: 1px; height: 22px; background: #c6caca; }
.pressed { background: #dcdfdf; box-shadow: inset 0 0 0 1px #b9bdbd; }

.title { height: 27px; flex: none; display: grid; grid-template-columns: 1fr auto 1fr; align-items: center; background: #dbe0df; padding: 0 8px; }
.title h1 { grid-column: 2; grid-row: 1; margin: 0; font-size: 13px; font-weight: 400; line-height: 20px; }
.brand, .quick { grid-row: 1; grid-column: 1; }
.brand { display: flex; align-items: center; gap: 3px; font: 600 18px/20px "Noto Sans", sans-serif; color: #56595b; }
.brand sup { font-size: 6px; line-height: 6px; margin-top: -8px; margin-left: -3px; }
.quick { display: flex; gap: 8px; margin-left: 76px; align-items: center; }
.quick .dd::after { margin-left: 7px; }
.quick .more { border-left: 1px solid #b8bdbd; height: 24px; }
.wctl { grid-column: 3; display: flex; justify-content: flex-end; gap: 10px; }

.tabs { height: 28px; flex: none; display: flex; background: #3d4546; color: #e7eaea; font-size: 13px; }
.tabs > button { padding: 0 23px; }
.tabs .file { width: 84px; padding: 0; justify-content: center; background: linear-gradient(160deg, #5fd140, #4aa436); }
.tabs .on { width: 92px; padding: 0; justify-content: center; background: #f8f9fb; color: #3f8e2c; }
.tools { margin-left: auto; display: flex; align-items: center; gap: 8px; padding-right: 6px; font-weight: 600; }
.tools .dd::after { border-top-color: #fff; margin-left: 7px; }

.ribbon { height: 109px; flex: none; display: flex; background: #f8f9fb; border-bottom: 2px solid #cdd3d2; overflow: hidden; }
.grp { flex: none; display: flex; flex-direction: column; margin: 2px 0; border-right: 1px solid #c6caca; }
.gb { flex: 1; display: grid; }
.gl { height: 20px; justify-content: center; }
.gl::after { margin-left: 4px; }
.big { flex-direction: column; justify-content: flex-start; padding-top: 4px; line-height: 16px; text-align: center; position: relative; }
.big svg { margin-bottom: 10px; }
.big.dd::after { margin: 5px 0 0; }
.ddi::after { position: absolute; right: 2px; bottom: 12px; margin: 0; }
.ddi { padding-right: 0; }
.rule::before { content: ""; position: absolute; left: 0; top: 0; width: 1px; height: 80px; background: #c6caca; }
.col { display: grid; grid-template-rows: repeat(3, 27px); align-content: start; padding-left: 8px; }
.col button { gap: 5px; }
.col .dd::after { margin-left: 3px; }
.mid { justify-content: center; padding: 0; }
.ops { width: 105px; } .ops .gb { grid-template-columns: 67px 1fr; }
.ops .dd::after { margin-left: 5px; }
.ops .big.dd::after { margin-left: 0; }
.data { width: 97px; }
.comp { width: 175px; } .comp .gb { grid-template-columns: 52px 37px 1fr; }
.comp .col { padding-left: 1px; }
.datum { width: 250px; } .datum .gb { grid-template-columns: 45px 1fr 52px; }
.datum .col { padding-left: 1px; }
.cut { width: 113px; } .cut .col { padding-left: 16px; }
.modi { width: 98px; }
.mview { width: 435px; } .mview .gb { grid-template-columns: 62px 48px 58px 108px 86px 1fr; }
.mview .col { padding-left: 4px; }
.intent { width: 226px; } .intent .gb { grid-template-columns: 84px 60px 57px 1fr; }
.intent .col { padding-left: 0; }
.inv { width: 151px; } .inv .gb { grid-template-columns: 68px 1fr; }
.cuerpo { width: 60px; }
.formas { width: 154px; } .formas .gb { grid-template-columns: 46px 1fr; }
.formas .col { padding-left: 2px; }
.ing { width: 200px; } .ing .gb { grid-template-columns: 96px 1fr; }
.ing .col { padding-left: 7px; }
.edi { width: 473px; } .edi .gb { grid-template-columns: 47px 81px 91px 125px 1fr; }
.edi .col { padding-left: 2px; }
.sup { width: 90px; } .sup .gb { grid-template-columns: 65px 1fr; }
.sup .col { padding-left: 5px; }
.int2 { width: 132px; }

.work { flex: 1; min-height: 0; display: flex; }
.side { flex: none; display: flex; flex-direction: column; min-height: 0; background: #f6fafb; border-right: 2px solid #dfe3e4; }
.wide { width: 461px; border-right-color: #9a9da0; }
.narrow { width: 266px; }
.ptabs { height: 25px; flex: none; display: flex; background: #dae0de; }
.ptabs button { width: 31px; justify-content: center; }
.ptabs .on { background: #f6fafb; }
.pbar { height: 33px; flex: none; display: flex; align-items: center; padding: 0 8px 0 10px; gap: 2px; }
.pbar button { width: 22px; height: 24px; justify-content: center; }
.pbar .dots { width: 6px; height: 16px; margin: 0 10px 0 2px; }
.pbar .vr { margin: 0 5px; height: 24px; }
.pbar .end { margin-left: auto; }
.narrow .pbar { gap: 2px; }
.narrow .pbar .vr { margin: 0 4px; }
.narrow .pbar .chev { width: 10px; font-size: 16px; }
.filter { height: 27px; flex: none; display: flex; align-items: center; padding: 0 10px 0 11px; gap: 3px; }
.field { flex: 1; display: flex; align-items: center; height: 27px; border: 1px solid #b9c6ca; background: #fff; padding-right: 3px; }
.field input { flex: 1; min-width: 0; border: 0; height: 20px; padding: 0 4px; background: none; font: inherit; }
.filter .dd { width: 16px; justify-content: center; }
.filter .dd::after { margin: 0; }
.tree { list-style: none; margin: 0; padding: 0 0 0 10px; display: grid; grid-auto-rows: 1fr; font-size: 10px; line-height: 16px; color: #4d5052; }
.tree li { display: flex; align-items: center; white-space: nowrap; min-height: 0; }
.tree .s { margin-right: 5px; height: 15px; }
.tree i { width: 16px; margin-right: 4px; align-self: stretch; position: relative; }
.tree .tk, .tree .vl, .tree .tg { background: linear-gradient(#d3d6d8, #d3d6d8) 8px 0 / 1px 100% no-repeat; }
.tree .tk::after { content: ""; position: absolute; left: 9px; top: 50%; width: 9px; height: 1px; background: #d3d6d8; }
.tree .last { background-size: 1px 50%; }
.tree .tg::after { content: ""; position: absolute; left: 7px; top: 50%; margin-top: -4px; border: 4px solid transparent; border-left: 5px solid #555; border-right: 0; }
.tree .open { background: none; }
.tree .open::after { left: 4px; margin-top: -2px; border: 4px solid transparent; border-top: 5px solid #555; border-bottom: 0; }
.ref { color: #c3b99f; }
.ref .s { filter: grayscale(1) opacity(.6); }
.t1 { height: 458px; margin-top: 5px; }
.insert { width: auto; height: 7px; margin: 3px 5px 4px 10px; border: 1px solid #62c544; border-width: 0 1px; background: linear-gradient(#62c544, #62c544) 0 50% / 100% 1px no-repeat; flex: none; }
.secs { height: 35px; }
.colhead { flex: none; display: grid; grid-template-columns: 1fr 11px 40px; height: 21px; margin: 5px 5px 0 8px; border-bottom: 1px solid #d5d9da; background: #f9fafa; font-size: 8px; text-align: center; }
.colhead span { border-right: 1px solid #dde0e1; }
.treebox { flex: 1; min-height: 0; display: grid; grid-template-columns: 201px 1fr 14px; margin: 0 5px 6px 8px; overflow: hidden; }
.t2 { height: 686px; padding-left: 2px; }
.colline { border-left: 1px solid #e4e8e9; }
.scroll { display: flex; flex-direction: column; background: #dcdcde; min-height: 0; height: 100%; }
.scroll button { height: 14px; flex: none; justify-content: center; background: #f5f6f6; border: 1px solid #dcdcde; }
.scroll .up::after, .scroll .down::after { content: ""; border: 3px solid transparent; border-bottom: 4px solid #999; border-top: 0; }
.scroll .down { margin-top: auto; }
.scroll .down::after { border-top: 4px solid #999; border-bottom: 0; }
.thumb { height: 116px; flex: none; background: #f8f8f8; border: 1px solid #c9cccd; }

.canvas { flex: 1; min-width: 0; position: relative; background: #e8e9ee; overflow: hidden; }
.vbar { width: 440px; height: 30px; margin: 6px auto 0; padding: 0 2px; display: flex; align-items: center; background: #f8f9fb; border: 1px solid #b9bcc0; }
.vbar button { flex: 1; height: 24px; justify-content: center; position: relative; }
.mn::after { content: ""; position: absolute; right: 2px; bottom: 2px; border: 2px solid transparent; border-right-color: #555; border-bottom-color: #555; }
/* the models sit freely on the drawing area */
.motor { position: absolute; top: 2px; width: 640px; pointer-events: none; }
.m1 { height: 600px; left: calc(50% - 372px); }
.m2 { height: 680px; left: calc(50% - 396px); }

.status { flex: none; height: 37px; display: flex; align-items: center; gap: 4px; padding: 6px 16px 0 6px; background: #f6fafb; border-top: 1px solid #c3c9ca; position: relative; }
.status button { height: 24px; min-width: 20px; justify-content: center; }
.status .vr { height: 24px; margin: 0 6px; }
.msg { flex: 1; align-self: flex-start; font-size: 10px; line-height: 14px; }
.msg b { color: #14597c; }
.right { display: flex; align-items: center; gap: 5px; margin-right: 90px; }
.r2 { margin-right: 94px; }
.right .vr { margin: 0 4px; }
.right .boxed { width: 39px; height: 28px; background: #f5f6f6; border: 1px solid #c3c6c8; margin-left: 4px; }
.boxed svg { width: 20px; height: 20px; }
.sel { position: relative; width: 174px; height: 24px; display: flex; }
.sel select { flex: 1; appearance: none; border: 1px solid #b9bfc2; background: linear-gradient(90deg, #b9bfc2, #b9bfc2) right 15px center / 1px 100% no-repeat #f8f9f9; padding: 0 6px; font: inherit; color: inherit; border-radius: 0; }
.sel::after { content: ""; position: absolute; right: 5px; top: 10px; border: 3px solid transparent; border-top: 5px solid #555; border-bottom: 0; }
```
